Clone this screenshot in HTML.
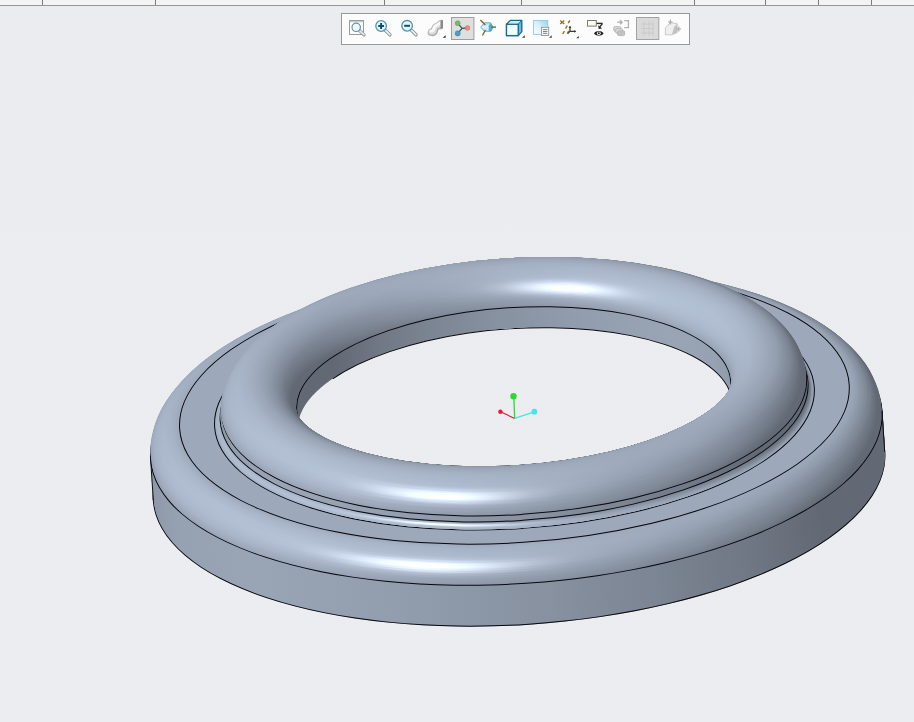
<!DOCTYPE html>
<html><head><meta charset="utf-8"><title>Model view</title>
<style>
html,body{margin:0;padding:0}
body{width:914px;height:722px;overflow:hidden;position:relative;background:linear-gradient(180deg,#eaecef 0%,#ebedf0 100%);font-family:"Liberation Sans",sans-serif}
#scene{position:absolute;left:519.15px;top:475.5px;width:0;height:0;transform-origin:0 0;transform:rotate(-3.78deg)}
#scene .d{position:absolute;border-radius:50%}
#scene .l{position:absolute;border-radius:50%;border:1.25px solid #08080e;box-sizing:border-box}
#scene .v{position:absolute;width:1.25px;background:#0c0c14}
#scene .c0{position:absolute;left:-500px;top:-400px;width:1000px;height:800px}
#scene .c{position:absolute;left:0;top:0;width:1000px;height:800px}
#scene .bgfix{position:absolute;left:500px;top:400px;width:914px;height:722px;transform-origin:0 0;transform:rotate(3.78deg) translate(-519.15px,-475.5px);background:linear-gradient(180deg,#eaecef 0%,#ebedf0 100%)}
#strip{position:absolute;left:0;top:0;width:914px;height:5px;background:#f3f3f1;border-bottom:1px solid #969696}
.vl{position:absolute;top:0;width:1px;height:5px;background:#7c7c7c}
</style></head><body>
<div id="scene"><div class="d" style="left:-366.5px;top:-148.8px;width:733px;height:297.6px;background:conic-gradient(from 0deg at 50% 147.82px,#656c78 0deg,#626974 40deg,#626974 80deg,#626974 106deg,#717986 119deg,#7c8593 137deg,#8791a0 171deg,#8e99a9 211deg,#99a4b5 250deg,#96a1b2 261deg,#8c96a6 270deg,#707884 286deg,#69707c 326deg,#656c78 360deg)"></div><div class="l" style="left:-367px;top:-149px;width:734px;height:298px"></div><div class="d" style="left:-366.5px;top:-150.75px;width:733px;height:297.6px;background:conic-gradient(from 0deg at 50% 147.82px,#656c78 0deg,#626974 40deg,#626974 80deg,#626974 106deg,#717986 119deg,#7c8593 137deg,#8791a0 171deg,#8e99a9 211deg,#99a4b5 250deg,#96a1b2 261deg,#8c96a6 270deg,#707884 286deg,#69707c 326deg,#656c78 360deg)"></div><div class="d" style="left:-366.5px;top:-152.71px;width:733px;height:297.6px;background:conic-gradient(from 0deg at 50% 147.82px,#656c78 0deg,#626974 40deg,#626974 80deg,#626974 106deg,#717986 119deg,#7c8593 137deg,#8791a0 171deg,#8e99a9 211deg,#99a4b5 250deg,#96a1b2 261deg,#8c96a6 270deg,#707884 286deg,#69707c 326deg,#656c78 360deg)"></div><div class="d" style="left:-366.5px;top:-154.66px;width:733px;height:297.6px;background:conic-gradient(from 0deg at 50% 147.82px,#656c78 0deg,#626974 40deg,#626974 80deg,#626974 106deg,#717986 119deg,#7c8593 137deg,#8791a0 171deg,#8e99a9 211deg,#99a4b5 250deg,#96a1b2 261deg,#8c96a6 270deg,#707884 286deg,#69707c 326deg,#656c78 360deg)"></div><div class="d" style="left:-366.5px;top:-156.61px;width:733px;height:297.6px;background:conic-gradient(from 0deg at 50% 147.82px,#656c78 0deg,#626974 40deg,#626974 80deg,#626974 106deg,#717986 119deg,#7c8593 137deg,#8791a0 171deg,#8e99a9 211deg,#99a4b5 250deg,#96a1b2 261deg,#8c96a6 270deg,#707884 286deg,#69707c 326deg,#656c78 360deg)"></div><div class="d" style="left:-366.5px;top:-158.57px;width:733px;height:297.6px;background:conic-gradient(from 0deg at 50% 147.82px,#656c78 0deg,#626974 40deg,#626974 80deg,#626974 106deg,#717986 119deg,#7c8593 137deg,#8791a0 171deg,#8e99a9 211deg,#99a4b5 250deg,#96a1b2 261deg,#8c96a6 270deg,#707884 286deg,#69707c 326deg,#656c78 360deg)"></div><div class="d" style="left:-366.5px;top:-160.52px;width:733px;height:297.6px;background:conic-gradient(from 0deg at 50% 147.82px,#656c78 0deg,#626974 40deg,#626974 80deg,#626974 106deg,#717986 119deg,#7c8593 137deg,#8791a0 171deg,#8e99a9 211deg,#99a4b5 250deg,#96a1b2 261deg,#8c96a6 270deg,#707884 286deg,#69707c 326deg,#656c78 360deg)"></div><div class="d" style="left:-366.5px;top:-162.48px;width:733px;height:297.6px;background:conic-gradient(from 0deg at 50% 147.82px,#656c78 0deg,#626974 40deg,#626974 80deg,#626974 106deg,#717986 119deg,#7c8593 137deg,#8791a0 171deg,#8e99a9 211deg,#99a4b5 250deg,#96a1b2 261deg,#8c96a6 270deg,#707884 286deg,#69707c 326deg,#656c78 360deg)"></div><div class="d" style="left:-366.5px;top:-164.43px;width:733px;height:297.6px;background:conic-gradient(from 0deg at 50% 147.82px,#656c78 0deg,#626974 40deg,#626974 80deg,#626974 106deg,#717986 119deg,#7c8593 137deg,#8791a0 171deg,#8e99a9 211deg,#99a4b5 250deg,#96a1b2 261deg,#8c96a6 270deg,#707884 286deg,#69707c 326deg,#656c78 360deg)"></div><div class="d" style="left:-366.5px;top:-166.38px;width:733px;height:297.6px;background:conic-gradient(from 0deg at 50% 147.82px,#656c78 0deg,#626974 40deg,#626974 80deg,#626974 106deg,#717986 119deg,#7c8593 137deg,#8791a0 171deg,#8e99a9 211deg,#99a4b5 250deg,#96a1b2 261deg,#8c96a6 270deg,#707884 286deg,#69707c 326deg,#656c78 360deg)"></div><div class="d" style="left:-366.5px;top:-168.34px;width:733px;height:297.6px;background:conic-gradient(from 0deg at 50% 147.82px,#656c78 0deg,#626974 40deg,#626974 80deg,#626974 106deg,#717986 119deg,#7c8593 137deg,#8791a0 171deg,#8e99a9 211deg,#99a4b5 250deg,#96a1b2 261deg,#8c96a6 270deg,#707884 286deg,#69707c 326deg,#656c78 360deg)"></div><div class="d" style="left:-366.5px;top:-170.29px;width:733px;height:297.6px;background:conic-gradient(from 0deg at 50% 147.82px,#656c78 0deg,#626974 40deg,#626974 80deg,#626974 106deg,#717986 119deg,#7c8593 137deg,#8791a0 171deg,#8e99a9 211deg,#99a4b5 250deg,#96a1b2 261deg,#8c96a6 270deg,#707884 286deg,#69707c 326deg,#656c78 360deg)"></div><div class="d" style="left:-366.5px;top:-172.25px;width:733px;height:297.6px;background:conic-gradient(from 0deg at 50% 147.82px,#656c78 0deg,#626974 40deg,#626974 80deg,#626974 106deg,#717986 119deg,#7c8593 137deg,#8791a0 171deg,#8e99a9 211deg,#99a4b5 250deg,#96a1b2 261deg,#8c96a6 270deg,#707884 286deg,#69707c 326deg,#656c78 360deg)"></div><div class="d" style="left:-366.5px;top:-174.2px;width:733px;height:297.6px;background:conic-gradient(from 0deg at 50% 147.82px,#656c78 0deg,#626974 40deg,#626974 80deg,#626974 106deg,#717986 119deg,#7c8593 137deg,#8791a0 171deg,#8e99a9 211deg,#99a4b5 250deg,#96a1b2 261deg,#8c96a6 270deg,#707884 286deg,#69707c 326deg,#656c78 360deg)"></div><div class="d" style="left:-366.5px;top:-176.15px;width:733px;height:297.6px;background:conic-gradient(from 0deg at 50% 147.82px,#656c78 0deg,#626974 40deg,#626974 80deg,#626974 106deg,#717986 119deg,#7c8593 137deg,#8791a0 171deg,#8e99a9 211deg,#99a4b5 250deg,#96a1b2 261deg,#8c96a6 270deg,#707884 286deg,#69707c 326deg,#656c78 360deg)"></div><div class="d" style="left:-366.5px;top:-178.11px;width:733px;height:297.6px;background:conic-gradient(from 0deg at 50% 147.82px,#656c78 0deg,#626974 40deg,#626974 80deg,#626974 106deg,#717986 119deg,#7c8593 137deg,#8791a0 171deg,#8e99a9 211deg,#99a4b5 250deg,#96a1b2 261deg,#8c96a6 270deg,#707884 286deg,#69707c 326deg,#656c78 360deg)"></div><div class="d" style="left:-366.5px;top:-180.06px;width:733px;height:297.6px;background:conic-gradient(from 0deg at 50% 147.82px,#656c78 0deg,#626974 40deg,#626974 80deg,#626974 106deg,#717986 119deg,#7c8593 137deg,#8791a0 171deg,#8e99a9 211deg,#99a4b5 250deg,#96a1b2 261deg,#8c96a6 270deg,#707884 286deg,#69707c 326deg,#656c78 360deg)"></div><div class="d" style="left:-366.5px;top:-182.02px;width:733px;height:297.6px;background:conic-gradient(from 0deg at 50% 147.82px,#656c78 0deg,#626974 40deg,#626974 80deg,#626974 106deg,#717986 119deg,#7c8593 137deg,#8791a0 171deg,#8e99a9 211deg,#99a4b5 250deg,#96a1b2 261deg,#8c96a6 270deg,#707884 286deg,#69707c 326deg,#656c78 360deg)"></div><div class="d" style="left:-366.5px;top:-183.97px;width:733px;height:297.6px;background:conic-gradient(from 0deg at 50% 147.82px,#656c78 0deg,#626974 40deg,#626974 80deg,#626974 106deg,#717986 119deg,#7c8593 137deg,#8791a0 171deg,#8e99a9 211deg,#99a4b5 250deg,#96a1b2 261deg,#8c96a6 270deg,#707884 286deg,#69707c 326deg,#656c78 360deg)"></div><div class="d" style="left:-366.5px;top:-185.92px;width:733px;height:297.6px;background:conic-gradient(from 0deg at 50% 147.82px,#656c78 0deg,#626974 40deg,#626974 80deg,#626974 106deg,#717986 119deg,#7c8593 137deg,#8791a0 171deg,#8e99a9 211deg,#99a4b5 250deg,#96a1b2 261deg,#8c96a6 270deg,#707884 286deg,#69707c 326deg,#656c78 360deg)"></div><div class="d" style="left:-366.5px;top:-187.88px;width:733px;height:297.6px;background:conic-gradient(from 0deg at 50% 147.82px,#656c78 0deg,#626974 40deg,#626974 80deg,#626974 106deg,#717986 119deg,#7c8593 137deg,#8791a0 171deg,#8e99a9 211deg,#99a4b5 250deg,#96a1b2 261deg,#8c96a6 270deg,#707884 286deg,#69707c 326deg,#656c78 360deg)"></div><div class="d" style="left:-366.5px;top:-189.83px;width:733px;height:297.6px;background:conic-gradient(from 0deg at 50% 148.03px,#656d78 0deg,#626974 40deg,#626974 80deg,#626974 105deg,#727a87 119deg,#7d8795 137deg,#8892a1 171deg,#909aab 211deg,#9aa6b7 250deg,#97a3b4 261deg,#8d98a8 270deg,#707884 287deg,#69717d 327deg,#656d78 360deg)"></div><div class="l" style="left:-367px;top:-190.03px;width:734px;height:298px"></div><div class="d" style="left:-366.45px;top:-191.35px;width:732.91px;height:297.56px;background:conic-gradient(from 0deg at 50% 148.02px,#666e79 0deg,#626974 40deg,#626974 80deg,#626974 104deg,#727b88 117deg,#7e8896 134deg,#8993a2 165deg,#919cac 205deg,#9da8ba 245deg,#9ca8b9 258deg,#95a0b0 267deg,#707885 289deg,#69717d 329deg,#666e79 360deg)"></div><div class="d" style="left:-366.32px;top:-192.82px;width:732.64px;height:297.45px;background:conic-gradient(from 0deg at 50% 147.97px,#676e7a 0deg,#626974 40deg,#626974 80deg,#626974 102deg,#737b88 115deg,#7f8897 131deg,#8994a3 159deg,#929dae 199deg,#9eaabc 239deg,#a0acbe 255deg,#9ba6b8 264deg,#8f99a9 273deg,#717a86 290deg,#6a727e 330deg,#676e7a 360deg)"></div><div class="d" style="left:-366.09px;top:-194.24px;width:732.18px;height:297.27px;background:conic-gradient(from 0deg at 50% 147.88px,#686f7b 0deg,#636a75 40deg,#626974 80deg,#626a75 101deg,#747d8a 114deg,#818a99 130deg,#8b95a5 157deg,#95a0b1 197deg,#a0adbf 237deg,#a3afc1 255deg,#9ea9bb 264deg,#909aab 274deg,#737c88 291deg,#707985 294deg,#6a727e 334deg,#686f7b 360deg)"></div><div class="d" style="left:-365.78px;top:-195.62px;width:731.55px;height:297.01px;background:conic-gradient(from 0deg at 50% 147.76px,#68707c 0deg,#646b76 40deg,#626974 63deg,#626974 99deg,#757e8b 113deg,#828b9a 128deg,#8c97a7 154deg,#98a3b4 194deg,#a2aec0 229deg,#a5b2c4 254deg,#a1adbf 263deg,#96a1b2 272deg,#767f8c 291deg,#717986 296deg,#6b737f 336deg,#68707c 360deg)"></div><div class="d" style="left:-365.37px;top:-196.94px;width:730.74px;height:296.68px;background:conic-gradient(from 0deg at 50% 147.61px,#69717d 0deg,#646c77 40deg,#626974 63deg,#626975 98deg,#757e8b 111deg,#828c9b 126deg,#8d98a7 150deg,#99a5b6 186deg,#a7b3c5 218deg,#a7b4c7 256deg,#a2aec0 265deg,#939eaf 275deg,#798290 291deg,#717986 298deg,#6b737f 338deg,#69717d 360deg)"></div><div class="d" style="left:-364.88px;top:-198.21px;width:729.76px;height:296.28px;background:conic-gradient(from 0deg at 50% 147.42px,#6a727d 0deg,#656d78 40deg,#626974 66deg,#626974 96deg,#77808e 111deg,#848e9d 126deg,#8f9aaa 151deg,#9ca7b8 181deg,#b2bed0 214deg,#b1bdd0 225deg,#aab6c9 242deg,#a9b5c8 258deg,#a2aec0 267deg,#798390 293deg,#717986 302deg,#6b7380 342deg,#6a727d 360deg)"></div><div class="d" style="left:-364.3px;top:-199.41px;width:728.6px;height:295.81px;background:conic-gradient(from 0deg at 50% 147.2px,#6a727e 0deg,#666d79 40deg,#626974 68deg,#626a75 95deg,#77808e 109deg,#848e9d 123deg,#8f9aaa 146deg,#9da8b9 174deg,#aebacc 193deg,#c1cde0 211deg,#c2cfe1 220deg,#bac6d9 229deg,#adbacd 240deg,#aab6c9 260deg,#a1adbf 269deg,#7e8795 292deg,#717986 305deg,#6c7480 345deg,#6a727e 360deg)"></div><div class="d" style="left:-363.64px;top:-200.55px;width:727.28px;height:295.27px;background:conic-gradient(from 0deg at 50% 146.95px,#6b737f 0deg,#676e7a 40deg,#626974 71deg,#626974 93deg,#798290 109deg,#86909f 123deg,#9aa5b6 163deg,#a8b3c5 179deg,#bfcbdd 195deg,#d5e1f3 209deg,#d9e5f8 216deg,#d5e2f4 222deg,#c6d2e6 230deg,#b3c0d3 239deg,#aebbce 246deg,#abb8cc 260deg,#a3afc2 269deg,#808a99 292deg,#727b87 307deg,#6f7784 321deg,#6b737f 360deg)"></div><div class="d" style="left:-362.89px;top:-201.62px;width:725.79px;height:294.67px;background:conic-gradient(from 0deg at 50% 146.67px,#6c7480 0deg,#676f7b 40deg,#626974 75deg,#626974 91deg,#7b8593 109deg,#8893a2 124deg,#9da9ba 163deg,#acb8ca 177deg,#c4d0e2 190deg,#e0ecff 203deg,#edf9ff 211deg,#effcff 217deg,#eaf6ff 222deg,#e0edff 226deg,#d0ddf0 231deg,#bbc7db 238deg,#b2bfd3 243deg,#acb9cc 262deg,#a1adbf 272deg,#838d9c 292deg,#757e8b 307deg,#707885 317deg,#6c7480 357deg,#6c7480 360deg)"></div><div class="d" style="left:-362.07px;top:-202.62px;width:724.14px;height:294px;background:conic-gradient(from 0deg at 50% 146.35px,#6c7480 0deg,#68707c 40deg,#626974 77deg,#626974 89deg,#7d8795 109deg,#8a94a4 124deg,#a0abbd 162deg,#afbbcd 175deg,#c7d3e5 187deg,#e0ecfe 197deg,#f3ffff 205deg,#feffff 212deg,#feffff 219deg,#f4ffff 224deg,#eefbff 226deg,#dfecff 230deg,#c0cde0 238deg,#b5c2d5 243deg,#b0bed1 250deg,#adbace 262deg,#a3afc1 272deg,#86909f 292deg,#78818e 308deg,#6f7884 325deg,#6c7480 360deg)"></div><div class="d" style="left:-361.17px;top:-203.54px;width:722.33px;height:293.27px;background:conic-gradient(from 0deg at 50% 146.01px,#6d7581 0deg,#69717c 40deg,#626974 80deg,#626974 87deg,#7f8997 109deg,#8d97a7 126deg,#a2adbf 161deg,#b1bdcf 174deg,#c9d5e7 186deg,#dfecfe 195deg,#f1feff 202deg,#ffffff 209deg,#feffff 222deg,#f3ffff 226deg,#dfecff 231deg,#c3d0e4 238deg,#b6c4d7 243deg,#b2bfd3 249deg,#aebbcf 262deg,#a4b0c3 272deg,#8893a2 292deg,#7b8492 308deg,#6f7784 333deg,#6d7581 360deg)"></div><div class="d" style="left:-360.19px;top:-204.39px;width:720.37px;height:292.47px;background:conic-gradient(from 0deg at 50% 145.64px,#6d7582 0deg,#69717d 40deg,#626974 80deg,#636a75 85deg,#828c9a 110deg,#929dad 130deg,#a3afc1 161deg,#b3c0d2 175deg,#ccd8eb 188deg,#e0edff 197deg,#f2feff 205deg,#fcffff 212deg,#fcffff 218deg,#f5ffff 223deg,#f0fdff 225deg,#e0edff 230deg,#c0cde1 239deg,#b6c3d7 244deg,#b2bfd3 252deg,#aebbcf 263deg,#a3afc1 274deg,#8b95a5 292deg,#7e8795 308deg,#727a87 335deg,#6e7682 356deg,#6d7582 360deg)"></div><div class="d" style="left:-359.14px;top:-205.16px;width:718.27px;height:291.62px;background:conic-gradient(from 0deg at 50% 145.24px,#6f7784 0deg,#6a727e 40deg,#626a75 80deg,#69717d 88deg,#848e9c 110deg,#919cac 126deg,#a5b1c3 163deg,#b6c2d4 178deg,#d5e2f5 197deg,#e0ecff 203deg,#eaf7ff 212deg,#eaf7ff 219deg,#e2efff 225deg,#deebff 227deg,#bcc9dd 240deg,#b4c2d6 246deg,#afbcd0 263deg,#a4b0c3 274deg,#8c97a6 293deg,#7f8997 310deg,#747d8a 339deg,#6f7784 360deg)"></div><div class="d" style="left:-358.02px;top:-205.85px;width:716.03px;height:290.71px;background:conic-gradient(from 0deg at 50% 144.81px,#737b88 0deg,#6b737f 40deg,#656d78 76deg,#6b737f 87deg,#8a95a4 114deg,#96a2b3 132deg,#a8b4c6 167deg,#bac6d9 186deg,#d3e0f3 208deg,#d7e4f7 217deg,#d2dff2 225deg,#b7c4d8 242deg,#b3c0d4 252deg,#afbcd0 264deg,#a2afc1 276deg,#8e99a9 293deg,#828b9a 311deg,#777f8d 343deg,#737b88 360deg)"></div><div class="d" style="left:-356.83px;top:-206.45px;width:713.66px;height:289.75px;background:conic-gradient(from 0deg at 50% 144.36px,#767f8d 0deg,#6f7783 40deg,#69717d 73deg,#6e7682 85deg,#8d98a8 115deg,#99a5b6 135deg,#abb8ca 175deg,#c4d1e4 211deg,#c5d2e5 222deg,#b4c1d5 245deg,#b0bed1 262deg,#a7b3c6 273deg,#909bab 293deg,#848e9d 312deg,#798290 346deg,#767f8d 360deg)"></div><div class="d" style="left:-355.58px;top:-206.96px;width:711.17px;height:288.73px;background:conic-gradient(from 0deg at 50% 143.89px,#7a8391 0deg,#737b88 40deg,#6e7682 73deg,#727a87 85deg,#909bab 116deg,#9ca7b9 137deg,#aab6c9 177deg,#b9c6d9 215deg,#b7c4d8 231deg,#b3c0d4 250deg,#b0bdd1 263deg,#a5b2c4 275deg,#919cad 294deg,#86909f 314deg,#7b8492 353deg,#7a8391 360deg)"></div><div class="d" style="left:-354.28px;top:-207.39px;width:708.55px;height:287.67px;background:conic-gradient(from 0deg at 50% 143.39px,#7d8795 0deg,#777f8d 40deg,#727b87 74deg,#767f8d 86deg,#929cad 115deg,#9ca8ba 136deg,#a8b4c7 176deg,#b2bfd2 216deg,#b2bfd3 256deg,#acb9cd 268deg,#939eae 295deg,#8892a1 316deg,#7e8896 356deg,#7d8795 360deg)"></div><div class="d" style="left:-352.91px;top:-207.73px;width:705.83px;height:286.57px;background:conic-gradient(from 0deg at 50% 142.87px,#818a99 0deg,#7a8491 40deg,#767f8d 74deg,#7b8492 87deg,#949fb0 116deg,#9eaabc 139deg,#a8b4c7 179deg,#afbccf 219deg,#b1bfd2 256deg,#acb9cc 268deg,#949fb0 295deg,#8a94a4 318deg,#818b99 358deg,#818a99 360deg)"></div><div class="d" style="left:-351.5px;top:-207.99px;width:703px;height:285.42px;background:conic-gradient(from 0deg at 50% 142.33px,#848e9d 0deg,#7e8896 40deg,#7b8492 75deg,#7f8997 88deg,#96a1b2 116deg,#a0acbe 141deg,#a7b4c7 181deg,#adbace 221deg,#b0bed1 256deg,#abb8cb 269deg,#95a1b1 296deg,#8b96a6 321deg,#848e9d 360deg)"></div><div class="d" style="left:-350.04px;top:-208.15px;width:700.08px;height:284.23px;background:conic-gradient(from 0deg at 50% 141.78px,#8791a1 0deg,#828c9b 40deg,#7f8897 76deg,#848e9c 89deg,#97a3b4 116deg,#a0acbf 142deg,#a7b4c7 182deg,#acb9cd 222deg,#afbcd0 256deg,#aab7ca 269deg,#97a2b3 296deg,#8e98a8 322deg,#8791a1 360deg)"></div><div class="d" style="left:-348.54px;top:-208.22px;width:697.08px;height:283.01px;background:conic-gradient(from 0deg at 50% 141.2px,#8a95a4 0deg,#86909f 40deg,#838d9c 77deg,#8893a2 91deg,#99a5b6 117deg,#a2aec0 147deg,#a7b4c7 187deg,#acb9cc 227deg,#aebbce 258deg,#a8b4c7 272deg,#98a3b4 297deg,#8f9aaa 327deg,#8a95a4 360deg)"></div><div class="d" style="left:-347px;top:-208.2px;width:694px;height:281.76px;background:conic-gradient(from 0deg at 50% 140.62px,#8d98a8 0deg,#8994a3 40deg,#8791a0 78deg,#8d98a8 94deg,#9ba7b8 119deg,#a3afc1 154deg,#a7b4c7 194deg,#abb8cc 234deg,#acb9cc 260deg,#a4b0c3 277deg,#98a3b4 300deg,#909bab 337deg,#8d98a8 360deg)"></div><div class="d" style="left:-345.43px;top:-208.09px;width:690.85px;height:280.49px;background:conic-gradient(from 0deg at 50% 140.02px,#909bab 0deg,#8d97a7 40deg,#8b95a5 79deg,#929dad 97deg,#9da8ba 122deg,#a3b0c2 162deg,#a7b3c6 202deg,#aab7ca 242deg,#a9b6c9 264deg,#99a4b5 302deg,#929dad 342deg,#909bab 360deg)"></div><div class="d" style="left:-343.82px;top:-207.89px;width:687.65px;height:279.18px;background:conic-gradient(from 0deg at 50% 139.41px,#939eaf 0deg,#909bab 40deg,#8f9aaa 80deg,#9da8ba 120deg,#a3afc1 160deg,#a5b2c5 200deg,#a8b5c8 240deg,#a8b4c7 264deg,#99a5b6 304deg,#949fb0 344deg,#939eaf 360deg)"></div><div class="d" style="left:-342.2px;top:-207.6px;width:684.39px;height:277.86px;background:conic-gradient(from 0deg at 50% 138.79px,#96a1b2 0deg,#939eaf 40deg,#929dae 80deg,#9da9bb 120deg,#a2aec0 160deg,#a4b0c3 200deg,#a6b3c5 240deg,#a5b1c4 267deg,#9aa6b7 306deg,#96a2b3 346deg,#96a1b2 360deg)"></div><div class="d" style="left:-340.55px;top:-207.22px;width:681.1px;height:276.53px;background:conic-gradient(from 0deg at 50% 138.16px,#98a3b4 0deg,#96a2b3 40deg,#96a1b2 80deg,#9da9bb 120deg,#a1adbf 160deg,#a2aec1 200deg,#a4b0c3 240deg,#a2afc1 270deg,#9ba7b8 310deg,#98a4b5 350deg,#98a3b4 360deg)"></div><div class="d" style="left:-338.89px;top:-206.75px;width:677.77px;height:275.18px;background:conic-gradient(from 0deg at 50% 137.53px,#9aa6b7 0deg,#99a5b6 40deg,#99a4b5 80deg,#9da9bb 120deg,#9fabbd 160deg,#a0acbf 200deg,#a1aec0 240deg,#a0abbd 277deg,#9ca7b9 317deg,#9aa6b7 357deg,#9aa6b7 360deg)"></div><div class="d" style="left:-337.22px;top:-206.19px;width:674.43px;height:273.82px;background:conic-gradient(from 0deg at 50% 136.89px,#9ca8ba 0deg,#9ca8b9 40deg,#9ca8b9 80deg,#9da9bb 120deg,#9eaabc 160deg,#9eaabc 200deg,#9fabbc 240deg,#9eaabc 280deg,#9da8ba 320deg,#9ca8ba 360deg)"></div><div class="d" style="left:-335.54px;top:-205.56px;width:671.08px;height:272.46px;background:conic-gradient(from 0deg at 50% 136.23px,#9da9bb 0deg,#9da9bb 40deg,#9da9bb 80deg,#9da9bb 120deg,#9da9bb 160deg,#9da9bb 200deg,#9da9bb 240deg,#9da9bb 280deg,#9da9bb 320deg,#9da9bb 360deg)"></div><div class="l" style="left:-336.04px;top:-205.76px;width:672.08px;height:272.86px"></div><div class="d" style="left:-300.1px;top:-191.17px;width:600.2px;height:243.68px;background:conic-gradient(from 0deg at 50% 121.81px,#9aa6b7 0deg,#99a5b6 40deg,#99a4b6 80deg,#9da9bb 120deg,#9fabbd 160deg,#a0acbe 200deg,#a1adc0 240deg,#9fabbd 278deg,#9ca7b9 318deg,#9aa6b7 358deg,#9aa6b7 360deg)"></div><div class="l" style="left:-300.6px;top:-191.37px;width:601.2px;height:244.09px"></div><div class="d" style="left:-299.16px;top:-190.85px;width:598.32px;height:242.92px;background:conic-gradient(from 0deg at 50% 121.36px,#939eaf 0deg,#919bac 40deg,#8f9aaa 80deg,#9da9ba 120deg,#a2afc1 160deg,#a5b2c4 200deg,#a8b5c8 240deg,#a7b4c6 265deg,#9aa5b6 304deg,#95a0b0 344deg,#939eaf 360deg)"></div><div class="d" style="left:-298.25px;top:-190.68px;width:596.49px;height:242.18px;background:conic-gradient(from 0deg at 50% 120.92px,#8b96a5 0deg,#8791a0 40deg,#848e9d 77deg,#8a94a4 92deg,#99a5b6 117deg,#a2aec0 147deg,#a7b4c6 187deg,#acb9cc 227deg,#adbace 258deg,#a7b4c6 273deg,#98a3b4 298deg,#8f9aaa 330deg,#8b96a5 360deg)"></div><div class="d" style="left:-297.38px;top:-190.66px;width:594.75px;height:241.47px;background:conic-gradient(from 0deg at 50% 120.51px,#828c9a 0deg,#7c8593 40deg,#78818e 75deg,#7d8694 88deg,#949fb0 115deg,#9eaabc 138deg,#a7b4c6 178deg,#aebbce 218deg,#b1bed2 256deg,#acb9cc 268deg,#95a0b1 295deg,#8b95a5 318deg,#828c9b 358deg,#828c9a 360deg)"></div><div class="d" style="left:-296.57px;top:-190.78px;width:593.15px;height:240.82px;background:conic-gradient(from 0deg at 50% 120.13px,#78818e 0deg,#707985 40deg,#6b737f 73deg,#6f7884 85deg,#8e99a9 115deg,#9aa6b7 135deg,#aab6c9 175deg,#bfcbdf 213deg,#becbde 226deg,#b3c1d5 246deg,#b0bed1 262deg,#a7b4c6 273deg,#919cac 293deg,#858f9e 312deg,#7b8492 347deg,#78818e 360deg)"></div><div class="d" style="left:-295.86px;top:-191.05px;width:591.71px;height:240.24px;background:conic-gradient(from 0deg at 50% 119.79px,#6d7682 0deg,#6a727e 40deg,#626974 80deg,#636b76 84deg,#838d9c 110deg,#929cad 128deg,#a4b0c1 161deg,#b3bfd1 175deg,#ccd9eb 190deg,#dfebfe 199deg,#f0fdff 209deg,#f3ffff 213deg,#f3ffff 219deg,#ebf8ff 224deg,#deebff 229deg,#bfcce0 239deg,#b6c3d7 244deg,#b2c0d4 253deg,#aebbcf 264deg,#a2aec0 275deg,#8b95a5 293deg,#7e8796 310deg,#737b88 339deg,#6d7682 360deg)"></div><div class="d" style="left:-295.25px;top:-191.46px;width:590.49px;height:239.74px;background:conic-gradient(from 0deg at 50% 119.5px,#6c7480 0deg,#68707b 40deg,#626974 77deg,#626974 90deg,#7d8694 109deg,#8994a3 124deg,#9faabc 162deg,#adb9cb 175deg,#c4d0e2 187deg,#e1edff 199deg,#f3ffff 207deg,#faffff 213deg,#faffff 218deg,#f2ffff 223deg,#dfecff 229deg,#becbdf 238deg,#b4c1d4 243deg,#b0bdd1 250deg,#adbacd 262deg,#a2aec0 272deg,#858f9e 292deg,#767f8d 308deg,#707884 322deg,#6c7480 360deg)"></div><div class="d" style="left:-294.75px;top:-191.99px;width:589.51px;height:239.34px;background:conic-gradient(from 0deg at 50% 119.27px,#6a727e 0deg,#666d79 40deg,#626974 68deg,#626974 95deg,#78818e 110deg,#858f9e 125deg,#909bab 150deg,#9ea9ba 177deg,#bdc9db 212deg,#becadc 221deg,#acb9cc 241deg,#aab6ca 259deg,#a2aec0 268deg,#7d8694 292deg,#717986 304deg,#6c7480 344deg,#6a727e 360deg)"></div><div class="d" style="left:-294.39px;top:-192.64px;width:588.79px;height:239.05px;background:conic-gradient(from 0deg at 50% 119.11px,#68707c 0deg,#636b76 40deg,#626974 64deg,#636a75 100deg,#757e8b 113deg,#818b99 128deg,#8c96a6 153deg,#97a2b3 193deg,#a2aec0 232deg,#a5b1c4 254deg,#a1adbf 263deg,#95a1b1 272deg,#767e8c 291deg,#707986 296deg,#6b737f 336deg,#68707c 360deg)"></div><div class="d" style="left:-294.17px;top:-193.39px;width:588.35px;height:238.87px;background:conic-gradient(from 0deg at 50% 119.01px,#666e79 0deg,#626974 40deg,#626974 80deg,#626974 104deg,#727b88 117deg,#7e8896 134deg,#8993a2 165deg,#919cac 205deg,#9da8ba 245deg,#9ca8b9 258deg,#94a0b0 267deg,#707885 289deg,#69717d 329deg,#666e79 360deg)"></div><div class="d" style="left:-294.1px;top:-194.21px;width:588.2px;height:238.81px;background:conic-gradient(from 0deg at 50% 118.48px,#656c78 0deg,#626974 40deg,#626974 80deg,#626974 106deg,#717986 119deg,#7c8593 137deg,#8791a0 171deg,#8e99a9 211deg,#99a4b5 250deg,#96a1b2 261deg,#8c96a6 270deg,#707884 286deg,#69707c 326deg,#656c78 360deg)"></div><div class="l" style="left:-294.6px;top:-194.42px;width:589.2px;height:239.22px"></div><div class="d" style="left:-294.1px;top:-196.05px;width:588.2px;height:238.81px;background:conic-gradient(from 0deg at 50% 118.48px,#656c78 0deg,#626974 40deg,#626974 80deg,#626974 106deg,#717986 119deg,#7c8593 137deg,#8791a0 171deg,#8e99a9 211deg,#99a4b5 250deg,#96a1b2 261deg,#8c96a6 270deg,#707884 286deg,#69707c 326deg,#656c78 360deg)"></div><div class="d" style="left:-294.1px;top:-197.89px;width:588.2px;height:238.81px;background:conic-gradient(from 0deg at 50% 118.48px,#656c78 0deg,#626974 40deg,#626974 80deg,#626974 106deg,#717986 119deg,#7c8593 137deg,#8791a0 171deg,#8e99a9 211deg,#99a4b5 250deg,#96a1b2 261deg,#8c96a6 270deg,#707884 286deg,#69707c 326deg,#656c78 360deg)"></div><div class="d" style="left:-293px;top:-199.29px;width:586px;height:237.92px;background:conic-gradient(from 0deg at 50% 118.35px,#656d78 0deg,#626974 40deg,#626974 80deg,#626a75 106deg,#727a87 119deg,#7d8695 137deg,#8792a1 171deg,#8f9aaa 211deg,#9aa5b7 250deg,#97a2b3 261deg,#8d98a7 270deg,#707884 287deg,#69717c 327deg,#656d78 360deg)"></div><div class="l" style="left:-293.5px;top:-199.49px;width:587px;height:238.32px"></div><div class="d" style="left:-292.97px;top:-200.48px;width:585.94px;height:237.89px;background:conic-gradient(from 0deg at 50% 118.34px,#666d79 0deg,#626974 40deg,#626974 80deg,#626974 104deg,#727a87 117deg,#7e8795 134deg,#8892a2 165deg,#909bab 205deg,#9ca8b9 245deg,#9ba7b8 258deg,#949faf 267deg,#7e8796 280deg,#707985 288deg,#69717d 328deg,#666d79 360deg)"></div><div class="d" style="left:-292.88px;top:-201.66px;width:585.77px;height:237.82px;background:conic-gradient(from 0deg at 50% 118.31px,#666e7a 0deg,#626974 40deg,#626974 80deg,#626974 103deg,#727a87 115deg,#7e8795 131deg,#8893a2 159deg,#919cac 199deg,#9da9ba 239deg,#9eaabc 255deg,#99a5b6 264deg,#8d98a8 273deg,#717a86 289deg,#6a727e 329deg,#666e7a 360deg)"></div><div class="d" style="left:-292.74px;top:-202.8px;width:585.48px;height:237.7px;background:conic-gradient(from 0deg at 50% 118.25px,#676f7a 0deg,#626a75 40deg,#626974 80deg,#626975 102deg,#727b88 114deg,#7f8997 130deg,#8a94a3 157deg,#939eae 197deg,#9faabc 237deg,#a1adbf 254deg,#9da8ba 263deg,#919cac 272deg,#717986 291deg,#6a727e 331deg,#676f7a 360deg)"></div><div class="d" style="left:-292.54px;top:-203.92px;width:585.08px;height:237.54px;background:conic-gradient(from 0deg at 50% 118.18px,#686f7b 0deg,#636a75 40deg,#626974 80deg,#626a75 101deg,#747d8a 114deg,#818b99 130deg,#8b96a5 157deg,#96a1b1 197deg,#a1adbf 237deg,#a3afc1 255deg,#9eaabc 264deg,#909bab 274deg,#737c89 291deg,#707985 294deg,#6a727e 334deg,#686f7b 360deg)"></div><div class="d" style="left:-292.28px;top:-205px;width:584.56px;height:237.33px;background:conic-gradient(from 0deg at 50% 118.07px,#68707c 0deg,#636b76 40deg,#626974 63deg,#626974 99deg,#757e8b 113deg,#818b9a 128deg,#8c97a6 154deg,#98a3b4 194deg,#a2aec0 230deg,#a5b1c4 254deg,#a1adbf 263deg,#96a1b2 272deg,#767f8c 291deg,#717986 296deg,#6b737f 336deg,#68707c 360deg)"></div><div class="d" style="left:-291.96px;top:-206.06px;width:583.92px;height:237.07px;background:conic-gradient(from 0deg at 50% 117.95px,#69717c 0deg,#646c77 40deg,#626974 63deg,#626974 98deg,#767f8c 112deg,#828c9b 127deg,#8d98a7 152deg,#99a5b6 189deg,#a5b1c3 220deg,#a7b3c6 256deg,#a1adbf 265deg,#939eae 275deg,#78818f 291deg,#717986 298deg,#6b737f 338deg,#69717c 360deg)"></div><div class="d" style="left:-291.59px;top:-207.07px;width:583.18px;height:236.77px;background:conic-gradient(from 0deg at 50% 117.81px,#69717d 0deg,#656c78 40deg,#626974 65deg,#626974 97deg,#757e8b 110deg,#828c9a 124deg,#8d98a7 147deg,#99a5b6 181deg,#acb8ca 215deg,#abb7ca 229deg,#a9b5c8 246deg,#a7b4c7 259deg,#9fabbd 268deg,#798290 292deg,#717986 300deg,#6b737f 340deg,#69717d 360deg)"></div><div class="d" style="left:-291.16px;top:-208.06px;width:582.32px;height:236.42px;background:conic-gradient(from 0deg at 50% 117.64px,#6a727e 0deg,#656d78 40deg,#626974 67deg,#626974 96deg,#77808d 110deg,#848d9c 124deg,#8e99a9 147deg,#9ba6b8 177deg,#b6c2d4 213deg,#b6c2d4 223deg,#abb7ca 241deg,#a9b6c9 258deg,#a2aec1 267deg,#7a8491 293deg,#717986 303deg,#6c7480 343deg,#6a727e 360deg)"></div><div class="d" style="left:-290.68px;top:-209px;width:581.36px;height:236.03px;background:conic-gradient(from 0deg at 50% 117.45px,#6a727e 0deg,#666e79 40deg,#626974 69deg,#626a75 95deg,#77808e 109deg,#848e9d 123deg,#8f9aaa 146deg,#9da8b9 173deg,#aebacc 192deg,#c2cee1 210deg,#c5d1e3 219deg,#becadd 227deg,#afbbce 239deg,#acb9cc 250deg,#a9b6c9 261deg,#a0acbe 270deg,#7e8795 292deg,#717986 305deg,#6c7480 345deg,#6a727e 360deg)"></div><div class="d" style="left:-290.14px;top:-209.91px;width:580.28px;height:235.6px;background:conic-gradient(from 0deg at 50% 117.24px,#6b737f 0deg,#666e7a 40deg,#626974 71deg,#626974 93deg,#798290 109deg,#86909f 123deg,#99a5b6 163deg,#a8b4c5 180deg,#d2def1 209deg,#d6e2f5 216deg,#d1def1 223deg,#b2bfd2 239deg,#aebbce 246deg,#abb8cb 260deg,#a3afc1 269deg,#808a98 292deg,#727a87 307deg,#6c7480 347deg,#6b737f 360deg)"></div><div class="d" style="left:-289.55px;top:-210.78px;width:579.1px;height:235.12px;background:conic-gradient(from 0deg at 50% 117.01px,#6b737f 0deg,#676f7a 40deg,#626974 73deg,#626974 92deg,#7b8492 109deg,#8892a1 124deg,#9da8b9 164deg,#abb7c9 178deg,#c3cfe1 192deg,#e0edff 207deg,#e7f4ff 214deg,#e5f2ff 220deg,#dfecff 224deg,#b8c5d9 238deg,#b0bdd1 244deg,#acb9cc 261deg,#a3afc2 270deg,#828c9b 292deg,#747d8a 307deg,#707885 316deg,#6c7480 356deg,#6b737f 360deg)"></div><div class="d" style="left:-288.91px;top:-211.61px;width:577.81px;height:234.59px;background:conic-gradient(from 0deg at 50% 116.76px,#6c7480 0deg,#686f7b 40deg,#626974 76deg,#636a75 91deg,#7c8694 109deg,#8993a3 124deg,#9eaabb 162deg,#acb8ca 175deg,#c2cee0 187deg,#e0ecff 200deg,#f2ffff 209deg,#f7ffff 215deg,#f4ffff 220deg,#effcff 223deg,#e0edff 228deg,#bdcadd 238deg,#b3c0d4 243deg,#b0bdd0 251deg,#acb9cd 262deg,#a2aec0 272deg,#848e9d 292deg,#767f8d 307deg,#707885 320deg,#6c7480 360deg)"></div><div class="d" style="left:-288.21px;top:-212.39px;width:576.42px;height:234.03px;background:conic-gradient(from 0deg at 50% 116.49px,#6c7481 0deg,#68707c 40deg,#626974 78deg,#626974 89deg,#7e8795 109deg,#8a95a4 124deg,#a0abbd 161deg,#afbacc 174deg,#c6d2e4 186deg,#e1eeff 197deg,#f3ffff 204deg,#ffffff 211deg,#feffff 220deg,#f3ffff 225deg,#e0edff 230deg,#c0cee1 238deg,#b5c2d6 243deg,#b1bed2 250deg,#adbace 262deg,#a3afc1 272deg,#86909f 292deg,#78818f 308deg,#6f7884 326deg,#6c7481 360deg)"></div><div class="d" style="left:-287.47px;top:-213.13px;width:574.93px;height:233.42px;background:conic-gradient(from 0deg at 50% 116.2px,#6d7581 0deg,#69717c 40deg,#626974 80deg,#626974 87deg,#7f8997 109deg,#8d97a7 126deg,#a1adbf 161deg,#b1bdcf 174deg,#c9d5e7 186deg,#dfecfe 195deg,#f1feff 202deg,#feffff 208deg,#feffff 222deg,#f3ffff 226deg,#dfecff 231deg,#c3d0e3 238deg,#b6c4d7 243deg,#b2bfd3 249deg,#aebbcf 262deg,#a4b0c3 272deg,#8892a2 292deg,#7a8491 308deg,#6f7784 333deg,#6d7581 360deg)"></div><div class="d" style="left:-286.67px;top:-213.83px;width:573.34px;height:232.78px;background:conic-gradient(from 0deg at 50% 115.89px,#6d7582 0deg,#69717d 40deg,#626974 80deg,#636a75 86deg,#828b9a 110deg,#929cad 131deg,#a2aebf 160deg,#b0bdcf 173deg,#c6d2e5 185deg,#e0edff 196deg,#f3ffff 204deg,#feffff 211deg,#ffffff 219deg,#f6ffff 224deg,#f0fdff 226deg,#deebfe 231deg,#c3d0e4 238deg,#b7c4d8 243deg,#b2c0d4 249deg,#afbcd0 262deg,#a5b1c4 272deg,#8a94a4 292deg,#7d8694 308deg,#717a86 334deg,#6e7682 353deg,#6d7582 360deg)"></div><div class="d" style="left:-285.83px;top:-214.48px;width:571.66px;height:232.09px;background:conic-gradient(from 0deg at 50% 115.56px,#6d7682 0deg,#6a727e 40deg,#626974 80deg,#636a75 84deg,#838d9b 110deg,#929dad 129deg,#a4b0c1 161deg,#b3bfd1 175deg,#cbd8ea 189deg,#e0edff 199deg,#f2ffff 209deg,#f6ffff 216deg,#f1feff 222deg,#e2efff 228deg,#dce9fd 230deg,#bfcce0 239deg,#b6c3d7 244deg,#b2c0d4 253deg,#aebbcf 264deg,#a2aec0 275deg,#8b95a5 293deg,#7e8795 310deg,#727b88 339deg,#6d7682 360deg)"></div><div class="d" style="left:-284.94px;top:-215.08px;width:569.88px;height:231.37px;background:conic-gradient(from 0deg at 50% 115.22px,#707885 0deg,#6b737f 34deg,#646b77 74deg,#636b76 81deg,#6c7480 90deg,#858f9e 111deg,#939eae 128deg,#a5b1c3 163deg,#b6c2d5 179deg,#dfecff 205deg,#e7f4ff 213deg,#e6f3ff 220deg,#ddebfe 226deg,#bbc9dd 240deg,#b4c2d6 246deg,#afbcd0 263deg,#a4b0c3 274deg,#8c97a7 293deg,#808998 310deg,#757d8a 340deg,#707885 360deg)"></div><div class="d" style="left:-284px;top:-215.64px;width:568.01px;height:230.61px;background:conic-gradient(from 0deg at 50% 114.85px,#727b88 0deg,#6b737f 40deg,#656d78 77deg,#6b737f 87deg,#8a94a4 114deg,#96a2b3 132deg,#a7b3c6 166deg,#b9c6d9 185deg,#d5e2f5 208deg,#d9e6f9 217deg,#d3e0f4 225deg,#b8c5d9 241deg,#b3c1d5 249deg,#b0bdd0 263deg,#a5b1c4 274deg,#8e99a9 293deg,#818b9a 311deg,#767f8c 343deg,#727b88 360deg)"></div><div class="d" style="left:-283.02px;top:-216.14px;width:566.05px;height:229.82px;background:conic-gradient(from 0deg at 50% 114.47px,#757e8b 0deg,#6d7581 40deg,#686f7b 73deg,#6b737f 84deg,#77808e 96deg,#8c96a6 114deg,#98a3b5 133deg,#aab6c8 171deg,#cad7ea 211deg,#cad7eb 221deg,#c2cfe3 231deg,#b5c2d7 243deg,#b0bdd1 263deg,#a4b1c3 275deg,#909aab 293deg,#838d9c 311deg,#78828f 344deg,#757e8b 360deg)"></div><div class="d" style="left:-282px;top:-216.6px;width:564px;height:228.99px;background:conic-gradient(from 0deg at 50% 114.07px,#78818e 0deg,#707885 40deg,#6b737f 73deg,#6f7784 85deg,#8e99a9 115deg,#9aa6b7 135deg,#aab7c9 175deg,#bfcce0 212deg,#bfcce0 224deg,#b3c1d5 246deg,#b0bed1 262deg,#a7b4c6 273deg,#919cac 293deg,#858f9e 312deg,#7a8391 347deg,#78818e 360deg)"></div><div class="d" style="left:-280.94px;top:-217.01px;width:561.88px;height:228.12px;background:conic-gradient(from 0deg at 50% 113.66px,#7a8391 0deg,#737b88 40deg,#6e7683 74deg,#737b88 86deg,#909bab 115deg,#9ba7b8 136deg,#a9b6c8 176deg,#b8c5d9 216deg,#b6c3d7 233deg,#b0bed1 262deg,#a6b3c6 274deg,#929dad 294deg,#86909f 314deg,#7b8593 353deg,#7a8391 360deg)"></div><div class="d" style="left:-279.84px;top:-217.36px;width:559.67px;height:227.23px;background:conic-gradient(from 0deg at 50% 113.23px,#7d8694 0deg,#767f8c 40deg,#717a86 74deg,#757e8c 86deg,#919cac 115deg,#9ca8b9 136deg,#a8b4c7 176deg,#b3c0d4 216deg,#b2bfd3 256deg,#acb9cd 268deg,#929dae 295deg,#8791a1 316deg,#7d8795 356deg,#7d8694 360deg)"></div><div class="d" style="left:-278.7px;top:-217.67px;width:557.39px;height:226.3px;background:conic-gradient(from 0deg at 50% 112.79px,#7f8997 0deg,#78818f 40deg,#747d8a 74deg,#78818f 86deg,#939eaf 116deg,#9eaabc 139deg,#a8b4c7 179deg,#b0bdd1 219deg,#b1bfd3 257deg,#abb8cc 269deg,#939faf 295deg,#8993a2 317deg,#808997 357deg,#7f8997 360deg)"></div><div class="d" style="left:-277.52px;top:-217.92px;width:555.04px;height:225.35px;background:conic-gradient(from 0deg at 50% 112.33px,#818b9a 0deg,#7b8492 40deg,#77808e 75deg,#7c8593 87deg,#94a0b0 116deg,#9fabbd 140deg,#a8b4c7 180deg,#afbccf 220deg,#b1bed2 256deg,#acb9cc 268deg,#95a0b1 295deg,#8a95a4 318deg,#828b9a 358deg,#818b9a 360deg)"></div><div class="d" style="left:-276.31px;top:-218.12px;width:552.62px;height:224.37px;background:conic-gradient(from 0deg at 50% 111.86px,#848e9c 0deg,#7e8795 40deg,#7a8391 75deg,#7f8897 88deg,#96a1b2 116deg,#a0acbe 141deg,#a7b4c7 181deg,#aebbce 221deg,#b0bed2 256deg,#abb8cb 269deg,#95a0b1 296deg,#8b96a6 320deg,#848e9c 360deg)"></div><div class="d" style="left:-275.07px;top:-218.27px;width:550.14px;height:223.36px;background:conic-gradient(from 0deg at 50% 111.37px,#86909f 0deg,#808a99 40deg,#7d8694 75deg,#818b9a 88deg,#97a2b3 116deg,#a0acbe 142deg,#a7b4c7 182deg,#adbacd 222deg,#b0bdd1 256deg,#abb8cb 269deg,#96a2b2 296deg,#8d97a7 322deg,#86909f 360deg)"></div><div class="d" style="left:-273.8px;top:-218.36px;width:547.6px;height:222.32px;background:conic-gradient(from 0deg at 50% 110.88px,#8892a2 0deg,#838d9c 40deg,#808998 76deg,#858f9e 90deg,#98a3b4 116deg,#a1adbf 143deg,#a7b4c7 183deg,#acb9cd 223deg,#afbcd0 256deg,#aab6c9 270deg,#97a3b4 296deg,#8e99a9 323deg,#8892a2 360deg)"></div><div class="d" style="left:-272.5px;top:-218.4px;width:544.99px;height:221.27px;background:conic-gradient(from 0deg at 50% 110.37px,#8a95a4 0deg,#85909f 40deg,#838c9b 76deg,#8892a1 90deg,#99a4b6 117deg,#a2aec0 147deg,#a7b4c7 187deg,#acb9cc 227deg,#aebbcf 257deg,#a9b5c8 271deg,#98a3b4 297deg,#8f9aaa 327deg,#8a95a4 360deg)"></div><div class="d" style="left:-271.17px;top:-218.39px;width:542.34px;height:220.19px;background:conic-gradient(from 0deg at 50% 109.85px,#8c97a6 0deg,#8892a1 40deg,#858f9e 77deg,#8b95a5 92deg,#9aa6b7 118deg,#a2afc1 151deg,#a7b4c7 191deg,#acb9cc 231deg,#adbacd 259deg,#a6b3c5 274deg,#98a4b5 298deg,#909bab 331deg,#8c97a6 360deg)"></div><div class="d" style="left:-269.82px;top:-218.33px;width:539.64px;height:219.09px;background:conic-gradient(from 0deg at 50% 109.33px,#8e99a9 0deg,#8a95a4 40deg,#8892a2 78deg,#8e99a9 94deg,#9ba7b8 119deg,#a3afc1 155deg,#a7b4c6 195deg,#abb8cb 235deg,#abb8cc 260deg,#a4b0c3 277deg,#98a3b4 301deg,#909bab 340deg,#8e99a9 360deg)"></div><div class="d" style="left:-268.45px;top:-218.21px;width:536.89px;height:217.98px;background:conic-gradient(from 0deg at 50% 108.79px,#909bab 0deg,#8d97a7 40deg,#8b95a5 79deg,#929dad 97deg,#9da8ba 122deg,#a3b0c2 162deg,#a7b4c6 202deg,#abb7cb 242deg,#a9b6c9 264deg,#99a4b5 302deg,#929dad 342deg,#909bab 360deg)"></div><div class="d" style="left:-267.05px;top:-218.04px;width:534.11px;height:216.85px;background:conic-gradient(from 0deg at 50% 108.25px,#929dad 0deg,#8f9aaa 40deg,#8d98a8 80deg,#9ca8ba 120deg,#a3afc1 160deg,#a6b2c5 200deg,#a9b6c9 240deg,#a8b5c8 264deg,#99a5b6 303deg,#939eaf 343deg,#929dad 360deg)"></div><div class="d" style="left:-265.64px;top:-217.82px;width:531.29px;height:215.7px;background:conic-gradient(from 0deg at 50% 107.7px,#949faf 0deg,#919cac 40deg,#909aab 80deg,#9da9ba 120deg,#a2aec1 160deg,#a5b2c4 200deg,#a8b4c7 240deg,#a7b3c6 265deg,#9aa5b7 304deg,#95a0b1 344deg,#949faf 360deg)"></div><div class="d" style="left:-264.22px;top:-217.55px;width:528.43px;height:214.54px;background:conic-gradient(from 0deg at 50% 107.14px,#95a1b1 0deg,#939eaf 40deg,#929dad 80deg,#9da9bb 120deg,#a2aec0 160deg,#a4b0c3 200deg,#a6b3c6 240deg,#a5b2c4 266deg,#9aa6b7 306deg,#96a1b2 346deg,#95a1b1 360deg)"></div><div class="d" style="left:-262.78px;top:-217.22px;width:525.55px;height:213.37px;background:conic-gradient(from 0deg at 50% 106.58px,#97a2b3 0deg,#95a0b1 40deg,#949fb0 80deg,#9da9bb 120deg,#a1adbf 160deg,#a3afc2 200deg,#a5b1c4 240deg,#a4b0c2 268deg,#9ba6b8 308deg,#98a3b4 348deg,#97a2b3 360deg)"></div><div class="d" style="left:-261.32px;top:-216.85px;width:522.65px;height:212.2px;background:conic-gradient(from 0deg at 50% 106.01px,#98a4b5 0deg,#97a2b3 40deg,#96a2b3 80deg,#9da9bb 120deg,#a0acbe 160deg,#a2aec0 200deg,#a3b0c2 240deg,#a2aec0 271deg,#9ba7b8 311deg,#99a4b5 351deg,#98a4b5 360deg)"></div><div class="d" style="left:-259.86px;top:-216.42px;width:519.73px;height:211.01px;background:conic-gradient(from 0deg at 50% 105.45px,#9aa5b7 0deg,#99a4b6 40deg,#98a4b5 80deg,#9da9bb 120deg,#a0acbe 160deg,#a1adbf 200deg,#a2aec0 240deg,#a0acbe 276deg,#9ca7b9 316deg,#9aa6b7 356deg,#9aa5b7 360deg)"></div><div class="d" style="left:-258.4px;top:-215.94px;width:516.79px;height:209.82px;background:conic-gradient(from 0deg at 50% 104.87px,#9ba7b8 0deg,#9ba6b8 40deg,#9aa6b7 80deg,#9da9bb 120deg,#9fabbd 160deg,#9fabbd 200deg,#a0acbe 240deg,#9faabc 280deg,#9ca8b9 320deg,#9ba7b8 360deg)"></div><div class="d" style="left:-256.92px;top:-215.41px;width:513.85px;height:208.62px;background:conic-gradient(from 0deg at 50% 104.3px,#9da8ba 0deg,#9ca8ba 40deg,#9ca8ba 80deg,#9da9bb 120deg,#9eaabb 160deg,#9eaabc 200deg,#9eaabc 240deg,#9eaabb 280deg,#9da9ba 320deg,#9da8ba 360deg)"></div><div class="c0"><div class="c" style="clip-path:ellipse(255.45px 103.71px at 500px 288.87px)"><div class="d" style="left:242.55px;top:184.35px;width:514.9px;height:209.05px;background:conic-gradient(from 0deg at 50% 104.54px,#9eaabc 0deg,#9eaabc 40deg,#9eaabc 80deg,#9da9bb 120deg,#9da9ba 160deg,#9da8ba 200deg,#9ca8ba 240deg,#9da9ba 280deg,#9ea9bb 320deg,#9eaabc 360deg)"></div><div class="c" style="clip-path:ellipse(253.98px 103.11px at 500px 288.9px)"><div class="d" style="left:244.02px;top:184.97px;width:511.95px;height:207.85px;background:conic-gradient(from 0deg at 50% 103.96px,#9fabbd 0deg,#a0acbe 40deg,#a0acbe 80deg,#9da9ba 120deg,#9ca7b9 160deg,#9ba7b8 200deg,#9aa6b7 240deg,#9ca8b9 280deg,#9eaabc 320deg,#9fabbd 360deg)"></div><div class="c" style="clip-path:ellipse(252.5px 102.52px at 500px 288.97px)"><div class="d" style="left:245.5px;top:185.64px;width:509.01px;height:206.66px;background:conic-gradient(from 0deg at 50% 103.39px,#a0acbe 0deg,#a1adbf 40deg,#a2aec0 80deg,#9da8ba 120deg,#9ba6b7 160deg,#99a5b6 200deg,#98a4b5 240deg,#9aa6b7 276deg,#9fabbc 316deg,#a0acbe 356deg,#a0acbe 360deg)"></div><div class="c" style="clip-path:ellipse(251.04px 101.92px at 500px 289.09px)"><div class="d" style="left:246.96px;top:186.35px;width:506.07px;height:205.47px;background:conic-gradient(from 0deg at 50% 102.82px,#a1adbf 0deg,#a3afc1 40deg,#a3b0c2 80deg,#9ca8ba 120deg,#99a5b6 160deg,#98a3b4 200deg,#96a2b2 240deg,#98a3b4 271deg,#9faabc 311deg,#a1adbf 351deg,#a1adbf 360deg)"></div><div class="c" style="clip-path:ellipse(249.58px 101.33px at 500px 289.25px)"><div class="d" style="left:248.42px;top:187.11px;width:503.15px;height:204.28px;background:conic-gradient(from 0deg at 50% 102.25px,#a2aec1 0deg,#a4b0c3 40deg,#a5b1c4 80deg,#9ca7b9 120deg,#98a3b4 160deg,#96a1b2 200deg,#949fb0 240deg,#95a1b1 268deg,#9eaabc 308deg,#a2aec0 348deg,#a2aec1 360deg)"></div><div class="c" style="clip-path:ellipse(248.12px 100.74px at 500px 289.46px)"><div class="d" style="left:249.88px;top:187.91px;width:500.25px;height:203.1px;background:conic-gradient(from 0deg at 50% 101.68px,#a3afc2 0deg,#a5b2c4 40deg,#a6b3c6 80deg,#9ba7b8 120deg,#97a2b3 160deg,#949fb0 200deg,#929dad 240deg,#939eaf 266deg,#9eaabc 306deg,#a2aec1 346deg,#a3afc2 360deg)"></div><div class="c" style="clip-path:ellipse(246.68px 100.15px at 500px 289.72px)"><div class="d" style="left:251.32px;top:188.76px;width:497.37px;height:201.93px;background:conic-gradient(from 0deg at 50% 101.12px,#a4b0c3 0deg,#a6b3c6 40deg,#a8b4c7 80deg,#9ba6b8 120deg,#95a0b1 160deg,#929dae 200deg,#909aaa 240deg,#919bac 265deg,#9eaabb 304deg,#a3afc1 344deg,#a4b0c3 360deg)"></div><div class="c" style="clip-path:ellipse(245.26px 99.57px at 500px 290.03px)"><div class="d" style="left:252.74px;top:189.64px;width:494.51px;height:200.77px;background:conic-gradient(from 0deg at 50% 100.56px,#a5b1c3 0deg,#a8b4c7 40deg,#a9b6c9 80deg,#9aa5b7 120deg,#949faf 160deg,#909bab 200deg,#8d98a8 240deg,#8e99a9 264deg,#9da9bb 303deg,#a3afc2 343deg,#a5b1c3 360deg)"></div><div class="c" style="clip-path:ellipse(243.85px 99px at 500px 290.38px)"><div class="d" style="left:254.15px;top:190.57px;width:491.69px;height:199.63px;background:conic-gradient(from 0deg at 50% 100.01px,#a5b2c4 0deg,#a9b5c8 40deg,#aab7ca 79deg,#a4b0c2 97deg,#99a4b5 122deg,#929dad 162deg,#8e99a9 202deg,#8b95a5 242deg,#8c96a6 264deg,#9da8ba 302deg,#a3b0c2 342deg,#a5b2c4 360deg)"></div><div class="c" style="clip-path:ellipse(242.45px 98.44px at 500px 290.78px)"><div class="d" style="left:255.55px;top:191.53px;width:488.91px;height:198.5px;background:conic-gradient(from 0deg at 50% 99.47px,#a6b2c5 0deg,#aab6c9 40deg,#acb9cc 78deg,#a6b2c5 94deg,#99a4b5 119deg,#919cac 155deg,#8d97a7 195deg,#8993a2 235deg,#8893a2 260deg,#909bab 277deg,#9ca8b9 301deg,#a4b0c2 340deg,#a6b2c5 360deg)"></div><div class="c" style="clip-path:ellipse(241.08px 97.88px at 500px 291.22px)"><div class="d" style="left:256.92px;top:192.53px;width:486.16px;height:197.38px;background:conic-gradient(from 0deg at 50% 98.93px,#a6b3c5 0deg,#aab7ca 40deg,#adbacd 77deg,#a7b4c7 92deg,#98a4b5 118deg,#909bab 151deg,#8b95a5 191deg,#8791a0 231deg,#86909f 259deg,#8c97a6 274deg,#9aa6b7 298deg,#a2afc1 331deg,#a6b3c5 360deg)"></div><div class="c" style="clip-path:ellipse(239.73px 97.33px at 500px 291.7px)"><div class="d" style="left:258.27px;top:193.56px;width:483.46px;height:196.28px;background:conic-gradient(from 0deg at 50% 98.41px,#a7b3c6 0deg,#abb8cb 40deg,#aebbcf 77deg,#a9b5c8 91deg,#98a3b4 117deg,#8f9aaa 147deg,#8994a3 187deg,#858f9d 227deg,#838d9b 257deg,#8892a2 271deg,#99a4b6 297deg,#a2aec0 327deg,#a7b3c6 360deg)"></div><div class="c" style="clip-path:ellipse(238.4px 96.79px at 500px 292.23px)"><div class="d" style="left:259.6px;top:194.63px;width:480.81px;height:195.21px;background:conic-gradient(from 0deg at 50% 97.89px,#a7b3c6 0deg,#acb9cc 40deg,#afbcd0 76deg,#aab6c9 90deg,#97a3b4 116deg,#8e99a9 143deg,#8892a1 183deg,#838c9b 223deg,#808998 256deg,#858f9e 270deg,#98a3b4 296deg,#a1adbf 323deg,#a7b3c6 360deg)"></div><div class="c" style="clip-path:ellipse(237.1px 96.26px at 500px 292.8px)"><div class="d" style="left:260.9px;top:195.72px;width:478.2px;height:194.15px;background:conic-gradient(from 0deg at 50% 97.38px,#a7b4c6 0deg,#adbacd 40deg,#b0bdd1 76deg,#abb8cb 89deg,#96a2b2 116deg,#8d97a7 142deg,#86909f 182deg,#808a98 222deg,#7d8695 256deg,#828c9b 269deg,#97a2b3 296deg,#a0acbe 322deg,#a7b4c6 360deg)"></div><div class="c" style="clip-path:ellipse(235.83px 95.75px at 500px 293.41px)"><div class="d" style="left:262.17px;top:196.85px;width:475.66px;height:193.12px;background:conic-gradient(from 0deg at 50% 96.89px,#a7b4c7 0deg,#adbace 40deg,#b0bed2 76deg,#abb8cb 89deg,#95a0b1 116deg,#8b96a6 140deg,#848e9c 180deg,#7e8795 220deg,#7a8391 255deg,#7f8897 268deg,#96a1b2 296deg,#a0acbe 321deg,#a7b4c7 360deg)"></div><div class="c" style="clip-path:ellipse(234.59px 95.24px at 500px 294.06px)"><div class="d" style="left:263.41px;top:198.01px;width:473.18px;height:192.11px;background:conic-gradient(from 0deg at 50% 96.4px,#a8b4c7 0deg,#afbccf 40deg,#b1bed2 76deg,#acb9cc 88deg,#95a0b1 115deg,#8a95a4 138deg,#828b9a 178deg,#7c8593 218deg,#77808d 254deg,#7c8593 267deg,#94a0b0 296deg,#9fabbd 320deg,#a8b4c7 360deg)"></div><div class="c" style="clip-path:ellipse(233.38px 94.75px at 500px 294.75px)"><div class="d" style="left:264.62px;top:199.19px;width:470.76px;height:191.13px;background:conic-gradient(from 0deg at 50% 95.93px,#a8b5c7 0deg,#b1bed1 40deg,#b1bfd3 77deg,#abb8cc 89deg,#939faf 115deg,#8993a2 137deg,#808997 177deg,#798290 217deg,#747d8a 254deg,#78818f 266deg,#939eaf 296deg,#9eaabc 319deg,#a8b4c7 359deg,#a8b5c7 360deg)"></div><div class="c" style="clip-path:ellipse(232.2px 94.27px at 500px 295.48px)"><div class="d" style="left:265.8px;top:200.4px;width:468.41px;height:190.17px;background:conic-gradient(from 0deg at 50% 95.47px,#a9b6c8 0deg,#b4c1d4 40deg,#b1bfd3 79deg,#abb7cb 90deg,#939eae 114deg,#8892a1 135deg,#7e8795 175deg,#777f8d 215deg,#717a86 253deg,#757e8b 265deg,#929dad 296deg,#9da9ba 318deg,#a9b5c8 358deg,#a9b6c8 360deg)"></div><div class="c" style="clip-path:ellipse(231.06px 93.81px at 500px 296.25px)"><div class="d" style="left:266.94px;top:201.63px;width:466.13px;height:189.25px;background:conic-gradient(from 0deg at 50% 95.03px,#abb7ca 0deg,#b8c5d9 36deg,#b6c3d7 53deg,#b0bed1 82deg,#a6b3c6 94deg,#929dad 114deg,#86909f 134deg,#7b8593 173deg,#747d8a 213deg,#6e7683 253deg,#727a87 265deg,#909bac 296deg,#9ca7b9 317deg,#a9b6c9 357deg,#abb7ca 360deg)"></div><div class="c" style="clip-path:ellipse(229.96px 93.36px at 500px 297.06px)"><div class="d" style="left:268.04px;top:202.88px;width:463.92px;height:188.35px;background:conic-gradient(from 0deg at 50% 94.6px,#adb9cc 0deg,#bfcce0 32deg,#bfcce0 44deg,#b3c1d5 66deg,#b0bed1 82deg,#a7b4c6 93deg,#919cac 113deg,#858f9e 132deg,#7a8391 167deg,#737b88 207deg,#6b737f 247deg,#6d7581 261deg,#757e8b 272deg,#8d97a7 293deg,#99a4b5 312deg,#a9b5c8 352deg,#adb9cc 360deg)"></div><div class="c" style="clip-path:ellipse(228.9px 92.93px at 500px 297.89px)"><div class="d" style="left:269.1px;top:204.15px;width:461.8px;height:187.49px;background:conic-gradient(from 0deg at 50% 94.18px,#b0bdcf 0deg,#c9d6e9 30deg,#cbd8eb 40deg,#c3d0e4 50deg,#b5c2d7 63deg,#b0bdd1 83deg,#a4b1c3 95deg,#909aab 113deg,#838d9c 131deg,#78828f 164deg,#707985 204deg,#68707c 244deg,#69717d 259deg,#717986 270deg,#8b95a5 293deg,#97a2b3 311deg,#aab6c8 351deg,#b0bdcf 360deg)"></div><div class="c" style="clip-path:ellipse(227.88px 92.52px at 500px 298.77px)"><div class="d" style="left:270.12px;top:205.44px;width:459.75px;height:186.66px;background:conic-gradient(from 0deg at 50% 93.78px,#b4c0d3 0deg,#d6e3f6 29deg,#d9e6f9 38deg,#d2dff3 46deg,#b8c5d9 61deg,#b3c1d5 69deg,#b0bdd0 83deg,#a5b1c4 94deg,#8e99a9 113deg,#818b9a 131deg,#767f8c 163deg,#6e7682 203deg,#676f7a 243deg,#656d78 257deg,#6b737f 267deg,#8a94a4 294deg,#96a2b3 312deg,#a7b3c6 346deg,#b4c0d3 360deg)"></div><div class="c" style="clip-path:ellipse(226.9px 92.12px at 500px 299.67px)"><div class="d" style="left:271.1px;top:206.74px;width:457.79px;height:185.86px;background:conic-gradient(from 0deg at 50% 93.4px,#b8c4d6 0deg,#dfecff 25deg,#e7f4ff 33deg,#e6f3ff 40deg,#ddebfe 46deg,#bbc9dd 60deg,#b4c2d6 66deg,#afbcd0 83deg,#a4b0c3 94deg,#8c97a7 113deg,#808998 130deg,#757d8a 160deg,#6c7480 200deg,#676f7b 240deg,#636a75 260deg,#69717d 268deg,#858f9e 291deg,#939eae 308deg,#a5b1c3 343deg,#b6c2d5 359deg,#b8c4d6 360deg)"></div><div class="c" style="clip-path:ellipse(225.96px 91.74px at 500px 300.6px)"><div class="d" style="left:272.04px;top:208.05px;width:455.92px;height:185.1px;background:conic-gradient(from 0deg at 50% 93.03px,#bbc7d9 0deg,#e0edff 19deg,#f2ffff 29deg,#f6ffff 36deg,#f1feff 42deg,#e2efff 48deg,#dce9fd 50deg,#bfcce0 59deg,#b6c3d7 64deg,#b2c0d4 73deg,#aebbcf 84deg,#a2aec0 95deg,#8b95a5 113deg,#7e8795 130deg,#727b88 159deg,#6d7581 185deg,#69717d 225deg,#626974 263deg,#848e9d 291deg,#929dad 309deg,#a4b0c1 341deg,#b3bfd1 355deg,#bbc7d9 360deg)"></div><div class="c" style="clip-path:ellipse(225.07px 91.38px at 500px 301.57px)"><div class="d" style="left:272.93px;top:209.38px;width:454.14px;height:184.38px;background:conic-gradient(from 0deg at 50% 92.69px,#bcc8db 0deg,#deeafd 15deg,#e3efff 17deg,#f3ffff 24deg,#feffff 31deg,#ffffff 39deg,#f6ffff 44deg,#f0fdff 46deg,#deebfe 51deg,#c3d0e4 58deg,#b7c4d8 63deg,#b2c0d4 69deg,#afbcd0 82deg,#a5b1c4 92deg,#8a94a4 112deg,#7d8694 128deg,#717a86 154deg,#6e7682 173deg,#6a727e 213deg,#636a75 253deg,#626974 265deg,#828b9a 290deg,#929cad 311deg,#a2aebf 340deg,#b0bdcf 353deg,#bcc8db 360deg)"></div><div class="c" style="clip-path:ellipse(224.23px 91.04px at 500px 302.56px)"><div class="d" style="left:273.77px;top:210.71px;width:452.46px;height:183.7px;background:conic-gradient(from 0deg at 50% 92.36px,#bcc8da 0deg,#dae6f9 13deg,#dfecfe 15deg,#f1feff 22deg,#feffff 28deg,#feffff 42deg,#f3ffff 46deg,#dfecff 51deg,#c3d0e3 58deg,#b6c4d7 63deg,#b2bfd3 69deg,#aebbcf 82deg,#a4b0c3 92deg,#8892a2 112deg,#7a8491 128deg,#6f7784 153deg,#6c7480 193deg,#676e7a 233deg,#626974 260deg,#626974 267deg,#7f8997 289deg,#8d97a7 306deg,#a1adbf 341deg,#b1bdcf 354deg,#bcc8da 360deg)"></div><div class="c" style="clip-path:ellipse(223.43px 90.71px at 500px 303.58px)"><div class="d" style="left:274.57px;top:212.05px;width:450.87px;height:183.05px;background:conic-gradient(from 0deg at 50% 92.05px,#b9c5d7 0deg,#d7e3f5 13deg,#e1eeff 17deg,#f3ffff 24deg,#ffffff 31deg,#feffff 40deg,#f3ffff 45deg,#e0edff 50deg,#c0cee1 58deg,#b5c2d6 63deg,#b1bed2 70deg,#adbace 82deg,#a3afc1 92deg,#86909f 112deg,#78818f 128deg,#6f7884 146deg,#6c7480 186deg,#676f7b 226deg,#626974 258deg,#626974 269deg,#7e8795 289deg,#8a95a4 304deg,#a0abbd 341deg,#afbacc 354deg,#b9c5d7 360deg)"></div><div class="c" style="clip-path:ellipse(222.69px 90.41px at 500px 304.62px)"><div class="d" style="left:275.31px;top:213.4px;width:449.38px;height:182.45px;background:conic-gradient(from 0deg at 50% 91.76px,#b4c0d2 0deg,#cfdcee 13deg,#e0ecff 20deg,#f2ffff 29deg,#f7ffff 35deg,#f4ffff 40deg,#effcff 43deg,#e0edff 48deg,#bdcadd 58deg,#b3c0d4 63deg,#b0bdd0 71deg,#acb9cd 82deg,#a2aec0 92deg,#848e9d 112deg,#767f8d 127deg,#707885 140deg,#6c7480 180deg,#686f7b 220deg,#626974 256deg,#636a75 271deg,#7c8694 289deg,#8993a3 304deg,#9eaabb 342deg,#acb8ca 355deg,#b4c0d2 360deg)"></div><div class="c" style="clip-path:ellipse(221.99px 90.13px at 500px 305.69px)"><div class="d" style="left:276.01px;top:214.75px;width:447.99px;height:181.88px;background:conic-gradient(from 0deg at 50% 91.49px,#aebacc 0deg,#c9d5e8 15deg,#e0edff 27deg,#e7f4ff 34deg,#e5f2ff 40deg,#dfecff 44deg,#b8c5d9 58deg,#b0bdd1 64deg,#acb9cc 81deg,#a3afc2 90deg,#828c9b 112deg,#747d8a 127deg,#707885 136deg,#6c7480 176deg,#686f7b 216deg,#626974 254deg,#626974 272deg,#7b8492 289deg,#8892a1 304deg,#9da8b9 344deg,#abb7c9 358deg,#aebacc 360deg)"></div><div class="c" style="clip-path:ellipse(221.35px 89.87px at 500px 306.78px)"><div class="d" style="left:276.65px;top:216.1px;width:446.7px;height:181.36px;background:conic-gradient(from 0deg at 50% 91.23px,#a8b4c5 0deg,#d2def1 29deg,#d6e2f5 36deg,#d1def1 43deg,#b2bfd2 59deg,#aebbce 66deg,#abb8cb 80deg,#a3afc1 89deg,#808a98 112deg,#727a87 127deg,#6c7480 167deg,#68707c 207deg,#626974 247deg,#626974 273deg,#798290 289deg,#86909f 303deg,#99a5b6 343deg,#a8b4c5 360deg)"></div><div class="c" style="clip-path:ellipse(220.76px 89.63px at 500px 307.88px)"><div class="d" style="left:277.24px;top:217.44px;width:445.52px;height:180.88px;background:conic-gradient(from 0deg at 50% 91px,#a2aebf 0deg,#c3cfe1 31deg,#c5d1e3 39deg,#becadd 47deg,#afbbce 59deg,#acb9cc 70deg,#a9b6c9 81deg,#a0acbe 90deg,#7e8795 112deg,#717986 125deg,#6c7480 165deg,#68707b 205deg,#626974 245deg,#626a75 275deg,#77808e 289deg,#848e9d 303deg,#8f9aaa 326deg,#9da8b9 353deg,#a2aebf 360deg)"></div><div class="c" style="clip-path:ellipse(220.22px 89.41px at 500px 309.01px)"><div class="d" style="left:277.78px;top:218.79px;width:444.44px;height:180.44px;background:conic-gradient(from 0deg at 50% 90.79px,#9da8ba 0deg,#b6c2d4 33deg,#b6c2d4 43deg,#abb7ca 61deg,#a9b6c9 78deg,#a2aec1 87deg,#7a8491 113deg,#717986 123deg,#6c7480 163deg,#686f7b 203deg,#626974 243deg,#626974 276deg,#77808d 290deg,#848d9c 304deg,#8e99a9 327deg,#9ba6b8 357deg,#9da8ba 360deg)"></div><div class="c" style="clip-path:ellipse(219.74px 89.21px at 500px 310.15px)"><div class="d" style="left:278.26px;top:220.13px;width:443.48px;height:180.05px;background:conic-gradient(from 0deg at 50% 90.6px,#99a4b5 0deg,#acb8ca 35deg,#abb7ca 49deg,#a9b5c8 66deg,#a7b4c7 79deg,#9fabbd 88deg,#798290 112deg,#717986 120deg,#6b737f 160deg,#676f7b 200deg,#626974 240deg,#626974 277deg,#757e8b 290deg,#828c9a 304deg,#8d98a7 327deg,#99a4b5 360deg)"></div><div class="c" style="clip-path:ellipse(219.31px 89.04px at 500px 311.31px)"><div class="d" style="left:278.69px;top:221.46px;width:442.62px;height:179.7px;background:conic-gradient(from 0deg at 50% 90.44px,#96a1b1 0deg,#a5b1c3 40deg,#a7b3c6 76deg,#a1adbf 85deg,#939eae 95deg,#78818f 111deg,#717986 118deg,#6b737f 158deg,#676f7a 198deg,#626974 238deg,#626974 278deg,#767f8c 292deg,#828c9b 307deg,#8d98a7 332deg,#96a1b1 360deg)"></div><div class="c" style="clip-path:ellipse(218.94px 88.89px at 500px 312.48px)"><div class="d" style="left:279.06px;top:222.78px;width:441.88px;height:179.4px;background:conic-gradient(from 0deg at 50% 90.29px,#939eae 0deg,#a0acbe 40deg,#a5b2c4 73deg,#a1adbf 83deg,#96a1b2 92deg,#767f8c 111deg,#717986 116deg,#6b737f 156deg,#676e7a 196deg,#626974 236deg,#626974 276deg,#636a75 280deg,#757e8b 293deg,#818b9a 308deg,#8c97a6 334deg,#939eae 360deg)"></div><div class="c" style="clip-path:ellipse(218.62px 88.76px at 500px 313.66px)"><div class="d" style="left:279.38px;top:224.09px;width:441.24px;height:179.14px;background:conic-gradient(from 0deg at 50% 90.17px,#919bac 0deg,#9da8ba 40deg,#a3afc2 72deg,#a0acbe 82deg,#95a0b1 91deg,#737c89 111deg,#707985 114deg,#6a727e 154deg,#666e79 194deg,#626974 234deg,#626974 274deg,#626a75 281deg,#747d8a 294deg,#818b99 310deg,#8b96a5 337deg,#919bac 360deg)"></div><div class="c" style="clip-path:ellipse(218.36px 88.66px at 500px 314.85px)"><div class="d" style="left:279.64px;top:225.39px;width:440.72px;height:178.93px;background:conic-gradient(from 0deg at 50% 90.07px,#8f9aaa 0deg,#9aa5b6 40deg,#a1adbf 71deg,#9eaabc 81deg,#949fb0 90deg,#717986 111deg,#6a727e 151deg,#666e79 191deg,#626974 231deg,#626974 271deg,#626975 282deg,#727b88 294deg,#7f8997 310deg,#8a94a3 337deg,#8f9aaa 360deg)"></div><div class="c" style="clip-path:ellipse(218.16px 88.57px at 500px 316.05px)"><div class="d" style="left:279.84px;top:226.67px;width:440.32px;height:178.77px;background:conic-gradient(from 0deg at 50% 89.99px,#8d98a8 0deg,#97a2b3 39deg,#9fabbd 71deg,#9ca8b9 81deg,#929dad 90deg,#707985 110deg,#6a727d 150deg,#656d78 190deg,#626974 230deg,#626974 270deg,#626974 283deg,#727a87 295deg,#7e8795 311deg,#8893a2 339deg,#8d98a8 360deg)"></div><div class="c" style="clip-path:ellipse(218.02px 88.51px at 500px 317.25px)"><div class="d" style="left:279.98px;top:227.93px;width:440.03px;height:178.65px;background:conic-gradient(from 0deg at 50% 89.93px,#8b96a5 0deg,#939eaf 36deg,#9ca8ba 70deg,#9aa5b6 81deg,#909aaa 90deg,#707985 108deg,#69717d 148deg,#656d78 188deg,#626974 228deg,#626974 268deg,#626974 284deg,#727a87 297deg,#7e8795 314deg,#8892a2 345deg,#8b96a5 360deg)"></div><div class="c" style="clip-path:ellipse(217.93px 88.48px at 500px 318.46px)"><div class="d" style="left:280.07px;top:229.17px;width:439.86px;height:178.58px;background:conic-gradient(from 0deg at 50% 89.9px,#8994a3 0deg,#919cad 38deg,#9aa5b7 70deg,#97a2b3 81deg,#8d98a7 90deg,#707884 107deg,#69717c 147deg,#646c77 187deg,#626974 224deg,#626974 264deg,#626a75 286deg,#727a87 299deg,#7d8695 317deg,#8792a1 351deg,#8994a3 360deg)"></div><div class="c" style="clip-path:ellipse(217.9px 88.47px at 500px 319.67px)"><div class="d" style="left:280.1px;top:230.39px;width:439.8px;height:178.56px;background:conic-gradient(from 0deg at 50% 90.23px,#8893a2 0deg,#919cac 40deg,#99a4b5 71deg,#96a1b2 81deg,#8c96a6 90deg,#707884 106deg,#69707c 146deg,#646c77 186deg,#626974 223deg,#626974 263deg,#626974 286deg,#717986 299deg,#7c8593 317deg,#8791a0 351deg,#8893a2 360deg)"></div><div class="c" style="clip-path:ellipse(217.9px 88.47px at 500px 321.58px)"><div class="d" style="left:280.1px;top:232.3px;width:439.8px;height:178.56px;background:conic-gradient(from 0deg at 50% 90.23px,#8893a2 0deg,#919cac 40deg,#99a4b5 71deg,#96a1b2 81deg,#8c96a6 90deg,#707884 106deg,#69707c 146deg,#646c77 186deg,#626974 223deg,#626974 263deg,#626974 286deg,#717986 299deg,#7c8593 317deg,#8791a0 351deg,#8893a2 360deg)"></div><div class="c" style="clip-path:ellipse(217.9px 88.47px at 500px 323.49px)"><div class="d" style="left:280.1px;top:234.21px;width:439.8px;height:178.56px;background:conic-gradient(from 0deg at 50% 90.23px,#8893a2 0deg,#919cac 40deg,#99a4b5 71deg,#96a1b2 81deg,#8c96a6 90deg,#707884 106deg,#69707c 146deg,#646c77 186deg,#626974 223deg,#626974 263deg,#626974 286deg,#717986 299deg,#7c8593 317deg,#8791a0 351deg,#8893a2 360deg)"></div><div class="c" style="clip-path:ellipse(217.9px 88.47px at 500px 325.4px)"><div class="d" style="left:280.1px;top:236.12px;width:439.8px;height:178.56px;background:conic-gradient(from 0deg at 50% 90.23px,#8893a2 0deg,#919cac 40deg,#99a4b5 71deg,#96a1b2 81deg,#8c96a6 90deg,#707884 106deg,#69707c 146deg,#646c77 186deg,#626974 223deg,#626974 263deg,#626974 286deg,#717986 299deg,#7c8593 317deg,#8791a0 351deg,#8893a2 360deg)"></div><div class="c" style="clip-path:ellipse(217.9px 88.47px at 500px 327.31px)"><div class="d" style="left:280.1px;top:238.03px;width:439.8px;height:178.56px;background:conic-gradient(from 0deg at 50% 90.23px,#8893a2 0deg,#919cac 40deg,#99a4b5 71deg,#96a1b2 81deg,#8c96a6 90deg,#707884 106deg,#69707c 146deg,#646c77 186deg,#626974 223deg,#626974 263deg,#626974 286deg,#717986 299deg,#7c8593 317deg,#8791a0 351deg,#8893a2 360deg)"></div><div class="c" style="clip-path:ellipse(217.9px 88.47px at 500px 329.22px)"><div class="d" style="left:280.1px;top:239.95px;width:439.8px;height:178.56px;background:conic-gradient(from 0deg at 50% 90.23px,#8893a2 0deg,#919cac 40deg,#99a4b5 71deg,#96a1b2 81deg,#8c96a6 90deg,#707884 106deg,#69707c 146deg,#646c77 186deg,#626974 223deg,#626974 263deg,#626974 286deg,#717986 299deg,#7c8593 317deg,#8791a0 351deg,#8893a2 360deg)"></div><div class="c" style="clip-path:ellipse(217.9px 88.47px at 500px 331.14px)"><div class="d" style="left:280.1px;top:241.86px;width:439.8px;height:178.56px;background:conic-gradient(from 0deg at 50% 90.23px,#8893a2 0deg,#919cac 40deg,#99a4b5 71deg,#96a1b2 81deg,#8c96a6 90deg,#707884 106deg,#69707c 146deg,#646c77 186deg,#626974 223deg,#626974 263deg,#626974 286deg,#717986 299deg,#7c8593 317deg,#8791a0 351deg,#8893a2 360deg)"></div><div class="c" style="clip-path:ellipse(217.9px 88.47px at 500px 333.05px)"><div class="d" style="left:280.1px;top:243.77px;width:439.8px;height:178.56px;background:conic-gradient(from 0deg at 50% 90.23px,#8893a2 0deg,#919cac 40deg,#99a4b5 71deg,#96a1b2 81deg,#8c96a6 90deg,#707884 106deg,#69707c 146deg,#646c77 186deg,#626974 223deg,#626974 263deg,#626974 286deg,#717986 299deg,#7c8593 317deg,#8791a0 351deg,#8893a2 360deg)"></div><div class="c" style="clip-path:ellipse(217.9px 88.47px at 500px 334.96px)"><div class="d" style="left:280.1px;top:245.68px;width:439.8px;height:178.56px;background:conic-gradient(from 0deg at 50% 90.23px,#8893a2 0deg,#919cac 40deg,#99a4b5 71deg,#96a1b2 81deg,#8c96a6 90deg,#707884 106deg,#69707c 146deg,#646c77 186deg,#626974 223deg,#626974 263deg,#626974 286deg,#717986 299deg,#7c8593 317deg,#8791a0 351deg,#8893a2 360deg)"></div><div class="c" style="clip-path:ellipse(217.9px 88.47px at 500px 336.87px)"><div class="d" style="left:280.1px;top:247.59px;width:439.8px;height:178.56px;background:conic-gradient(from 0deg at 50% 90.23px,#8893a2 0deg,#919cac 40deg,#99a4b5 71deg,#96a1b2 81deg,#8c96a6 90deg,#707884 106deg,#69707c 146deg,#646c77 186deg,#626974 223deg,#626974 263deg,#626974 286deg,#717986 299deg,#7c8593 317deg,#8791a0 351deg,#8893a2 360deg)"></div><div class="c" style="clip-path:ellipse(217.9px 88.47px at 500px 338.78px)"><div class="d" style="left:280.1px;top:249.5px;width:439.8px;height:178.56px;background:conic-gradient(from 0deg at 50% 90.23px,#8893a2 0deg,#919cac 40deg,#99a4b5 71deg,#96a1b2 81deg,#8c96a6 90deg,#707884 106deg,#69707c 146deg,#646c77 186deg,#626974 223deg,#626974 263deg,#626974 286deg,#717986 299deg,#7c8593 317deg,#8791a0 351deg,#8893a2 360deg)"></div><div class="c" style="clip-path:ellipse(217.9px 88.47px at 500px 340.69px)"><div class="bgfix"></div></div><div class="l" style="left:282.1px;top:252.22px;width:435.8px;height:176.93px;border-left-color:transparent"></div></div></div></div></div></div></div></div></div></div></div></div><div class="l" style="left:282.1px;top:231.2px;width:435.8px;height:176.93px"></div></div></div></div></div></div></div></div></div></div></div></div></div></div></div></div></div></div></div></div></div></div></div></div></div></div></div></div></div></div></div></div></div></div></div></div></div></div></div></div></div></div><div class="v" style="left:-367px;top:-41.03px;height:41.03px"></div><div class="v" style="left:366px;top:-41.03px;height:41.03px"></div></div>
<div id="strip"></div>
<i class="vl" style="left:42px"></i><i class="vl" style="left:155px"></i><i class="vl" style="left:384px"></i><i class="vl" style="left:521px"></i><i class="vl" style="left:694px"></i><i class="vl" style="left:765px"></i><i class="vl" style="left:818px"></i><i class="vl" style="left:871px"></i>
<svg id="tb" width="360" height="40" viewBox="336 8 360 40" style="position:absolute;left:336px;top:8px">
<defs>
<linearGradient id="gh" x1="0" y1="0" x2="1" y2="1"><stop offset="0" stop-color="#f4f4f4"/><stop offset="1" stop-color="#b9bcc0"/></linearGradient>
<linearGradient id="gv" x1="1" y1="0" x2="0" y2="1"><stop offset="0" stop-color="#8fd3ea"/><stop offset="0.5" stop-color="#d9f1f9"/><stop offset="1" stop-color="#ffffff"/></linearGradient>
<radialGradient id="gb" cx="0.4" cy="0.35" r="0.7"><stop offset="0" stop-color="#ffffff"/><stop offset="1" stop-color="#9a9a9a"/></radialGradient>
</defs>
<rect x="341.5" y="13.5" width="348" height="31" fill="#fcfcfc" stroke="#979797" stroke-width="1"/>
<!-- 1 refit -->
<rect x="349.5" y="20.5" width="14" height="14" fill="#fdfdfd" stroke="#9a9a9a" stroke-width="1"/>
<rect x="350" y="21" width="13" height="1.3" fill="#c5ccd6"/>
<path d="M359.6 30.6 L364 34.8" stroke="#87919a" stroke-width="3.2" stroke-linecap="round"/>
<path d="M359.8 30.8 L363.9 34.7" stroke="#eceff1" stroke-width="1.6" stroke-linecap="round"/>
<circle cx="356.2" cy="27.3" r="4.2" fill="#f1f8fb" stroke="#5f93a6" stroke-width="1.2"/>
<!-- 2 zoom in -->
<path d="M385.2 30.2 L389.9 34.8" stroke="#87919a" stroke-width="3.4" stroke-linecap="round"/>
<path d="M385.4 30.4 L389.8 34.7" stroke="#eceff1" stroke-width="1.7" stroke-linecap="round"/>
<circle cx="381.1" cy="26" r="5.3" fill="#e4f6fb" stroke="#4f94a8" stroke-width="1.3"/>
<path d="M378.2 26 H384 M381.1 23.1 V28.9" stroke="#0c4f74" stroke-width="2"/>
<!-- 3 zoom out -->
<path d="M411.2 30 L416 34.7" stroke="#87919a" stroke-width="3.4" stroke-linecap="round"/>
<path d="M411.4 30.2 L415.9 34.6" stroke="#eceff1" stroke-width="1.7" stroke-linecap="round"/>
<circle cx="407.1" cy="25.8" r="5.3" fill="#e4f6fb" stroke="#4f94a8" stroke-width="1.3"/>
<path d="M404.2 25.8 H410" stroke="#0c4f74" stroke-width="2"/>
<!-- 4 repaint -->
<path d="M431.4 32.3 C435.6 33.6 433.4 27.6 437 26.4 C439.4 25.6 440.2 24.6 441 23.6" stroke="#a9a9a9" stroke-width="7.4" stroke-linecap="round" fill="none"/>
<path d="M431.2 31.9 C435.4 33 433.2 27.2 436.8 26 C439.2 25.2 440 24.2 440.8 23.2" stroke="#dcdcdc" stroke-width="5.4" stroke-linecap="round" fill="none"/>
<path d="M430.8 31.2 C434.8 32 433 26.4 436.4 25.2 C438.6 24.4 439.4 23.6 440.2 22.8" stroke="#fafafa" stroke-width="2.6" stroke-linecap="round" fill="none"/>
<path d="M440.4 20.6 L443 19.9 V28.2 L440.6 29.6 Z" fill="#8a8a8a"/>
<path d="M443 19.5 H446 V29 H443 Z" fill="#fcfcfc"/>
<path d="M445.6 35.2 V37.8 H442.7 Z" fill="#2b2b2b"/>
<!-- 5 spin center (active) -->
<rect x="451.5" y="17.5" width="22.4" height="22" fill="#dfdfdf" stroke="#9d9d9d"/>
<path d="M457.7 23.2 L462.1 28.4 L467.5 28 M462.1 28.4 L457.7 33.4" stroke="#2f5568" stroke-width="1.3" fill="none"/>
<circle cx="457.7" cy="23.2" r="2.5" fill="#7db56c" stroke="#5f9a55" stroke-width="0.5"/><circle cx="467.5" cy="28" r="2.4" fill="#e88b7d" stroke="#cf6f63" stroke-width="0.5"/><circle cx="457.7" cy="33.4" r="2.6" fill="#4f9cc4" stroke="#3b84ad" stroke-width="0.5"/>
<!-- 6 orient -->
<path d="M480.7 27.1 L484.4 22.8 H490.5 L493.1 27.1 L491 31.2 H484.4 Z" fill="#c9edf8" stroke="#44a3c9" stroke-width="0.9" stroke-linejoin="round"/>
<path d="M488.2 26.6 L490.5 22.8 L493.1 27.1 L491 31.2 L488 31.2 Z" fill="#4fafd4"/>
<path d="M481.4 27.2 L488.2 26.8 L488 31" fill="none" stroke="#e9f8fd" stroke-width="1"/>
<path d="M480.4 20 L485.4 25 M482.4 35.5 L485.4 30.2" stroke="#8a6238" stroke-width="1.4"/>
<path d="M491.2 27.1 H496" stroke="#6e7a3a" stroke-width="1.5"/>
<!-- 7 display style cube -->
<path d="M506.5 24.3 L510.3 20.4 H521.7 V31.6 L518.2 35.6 H506.5 Z" fill="#c4ecf6" stroke="#176a8c" stroke-width="1.3" stroke-linejoin="round"/>
<path d="M518.2 24.3 L521.7 20.4 V31.6 L518.2 35.6 Z" fill="#67bcd9" stroke="#176a8c" stroke-width="1"/>
<rect x="506.5" y="24.3" width="11.7" height="11.3" fill="#f1fcff" stroke="#176a8c" stroke-width="1.3"/>
<path d="M524.8 35.3 V37.8 H522 Z" fill="#3a3a3a"/>
<!-- 8 saved orientations -->
<rect x="533.6" y="20.4" width="14.2" height="14.2" fill="url(#gv)" stroke="#93c9e2" stroke-width="0.9"/>
<rect x="541.5" y="27.3" width="7.2" height="8.2" fill="#f6f6f6" stroke="#8d979e" stroke-width="0.9"/>
<path d="M543 29.6 H547.3 M543 31.5 H547.3 M543 33.4 H547.3" stroke="#6f7a80" stroke-width="0.9"/>
<path d="M551.7 35.3 V37.8 H548.9 Z" fill="#3a3a3a"/>
<!-- 9 datum display -->
<path d="M560.2 20.6 L564.3 24 M564.3 20.6 L560.2 24" stroke="#9a6a1a" stroke-width="1.3"/>
<path d="M569.8 20.5 L568.2 23.2 M567.2 25.5 L565.6 28.6 M564.4 31 L562.8 34 M568.8 30.8 L567.4 33.6" stroke="#8a7a1e" stroke-width="1.5"/>
<path d="M570 26.5 V31.4 H575.5" stroke="#3c3c3c" stroke-width="1.2" fill="none"/>
<path d="M568.6 28 L570 25.8 L571.4 28 Z M574.2 30 L576.3 31.4 L574.2 32.8 Z" fill="#3c3c3c"/>
<path d="M570 31.4 L567.6 33.6" stroke="#3c3c3c" stroke-width="1.1"/>
<path d="M578.8 36 V38.3 H576.2 Z" fill="#3a3a3a"/>
<!-- 10 annotation display -->
<rect x="587.5" y="20.5" width="8.8" height="5.6" fill="#fcfcf8" stroke="#7c7c62" stroke-width="1"/>
<path d="M596.6 23.4 H602.6" stroke="#2f2f2f" stroke-width="1.4" fill="none"/>
<path d="M602.4 23.6 L599.2 27.6" stroke="#2f2f2f" stroke-width="1.4" fill="none"/>
<path d="M598.2 25.2 L598.6 29 L602.2 28.4 Z" fill="#2f2f2f"/>
<path d="M594 33.4 C596.4 30.2 601.2 30.2 603.6 33.4 C601.2 36.4 596.4 36.4 594 33.4 Z" fill="#1e1e1e"/>
<circle cx="598.8" cy="33.3" r="1.9" fill="#f4f4f4"/><circle cx="598.8" cy="33.3" r="1" fill="#1e1e1e"/>
<!-- 11 disabled -->
<g stroke="#b0b0b0" fill="none" stroke-width="1.3">
<path d="M617 22.2 H622 M620 20.2 L622.2 22.2 L620 24.2"/>
<path d="M624.2 20.6 H628.4 V27.6 H624.2"/>
</g>
<g fill="#dcdcdc" stroke="#b4b4b4" stroke-width="0.9">
<rect x="613.8" y="26.6" width="7" height="4.6" rx="1.2"/>
<rect x="615.6" y="28.6" width="7" height="4.6" rx="1.2"/>
<rect x="617.6" y="30.8" width="7" height="4.8" rx="1.2" fill="#c4c4c4"/>
</g>
<!-- 12 disabled box -->
<rect x="636.5" y="17.5" width="22.3" height="22" fill="#dadada" stroke="#a3a3a3"/>
<g stroke="#c6c6c6" stroke-width="0.8" fill="none"><path d="M641 24 H654 M641 28.5 H654 M641 33 H654 M644 21 V36 M649 21 V36 M653 21 V36"/></g>
<!-- 13 disabled cube -->
<path d="M665.4 28 L670.4 22.6 L677.2 23.8 V32.6 L672 34.8 H665.4 Z" fill="#efefef" stroke="#c6c6c6" stroke-width="0.9"/>
<path d="M677.2 23.8 V32.6 L672 34.8 L674 27 Z" fill="#c2c2c2"/>
<path d="M670.3 19.6 V24.4 M668 22 H672.6 M678.8 26.6 V31.4 M676.4 29 H681.2" stroke="#a6a6a6" stroke-width="1.1"/>
</svg>
<svg id="csys" width="60" height="40" viewBox="490 385 60 40" style="position:absolute;left:490px;top:385px">
<path d="M514.7 418.4 L500.5 411.8" stroke="#d8203a" stroke-width="1.1"/>
<path d="M514.7 418.4 L534.2 411.8" stroke="#3fe8ee" stroke-width="1.3"/>
<path d="M514.7 418.4 L513.8 397" stroke="#35d635" stroke-width="1.3"/>
<circle cx="500.4" cy="411.7" r="2.2" fill="#e02038"/>
<circle cx="534.4" cy="411.7" r="2.9" fill="#3fe8ee"/>
<circle cx="513.5" cy="396.3" r="3.2" fill="#2fd82f"/>
</svg>

</body></html>
